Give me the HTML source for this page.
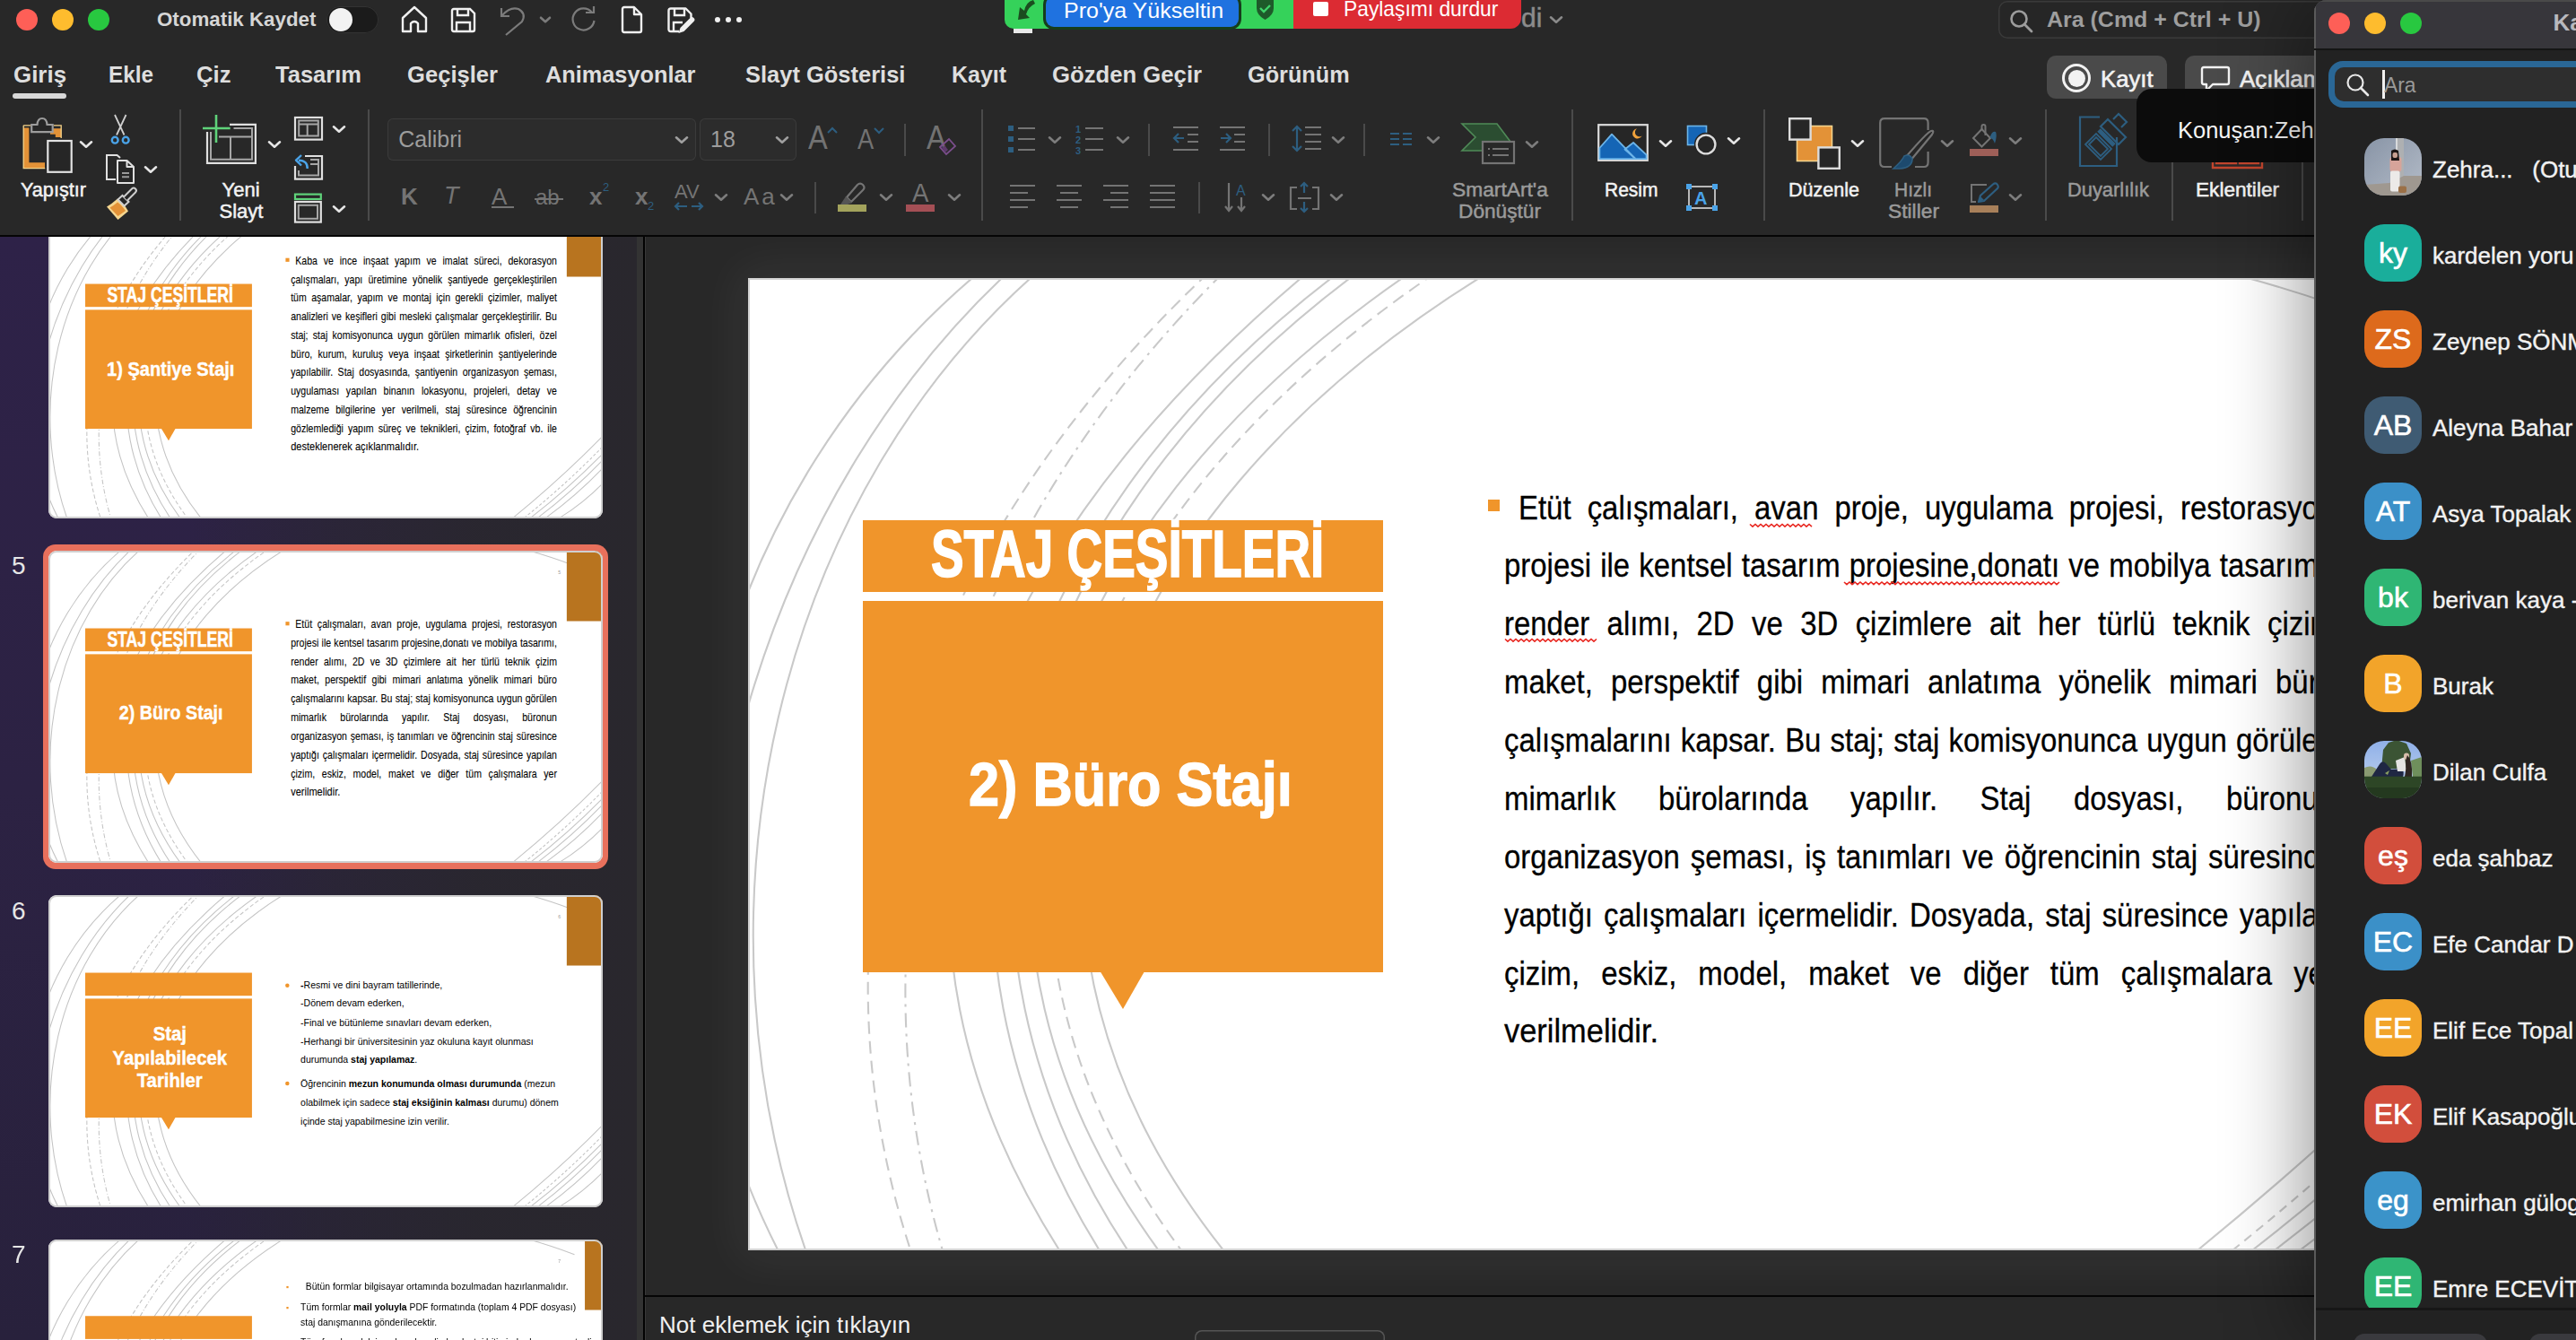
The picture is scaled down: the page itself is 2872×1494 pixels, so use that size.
<!DOCTYPE html><html><head><meta charset="utf-8"><style>html,body{margin:0;padding:0;width:2872px;height:1494px;overflow:hidden;background:#262626}#root{position:relative;width:2872px;height:1494px;overflow:hidden;font-family:"Liberation Sans", sans-serif;background:#282828}b{font-weight:700} .th .arcs{stroke-width:3.3px;stroke:#c4c4c4}</style></head><body><div id="root"><div style="position:absolute;left:0px;top:0px;width:2872px;height:262px;background:#282828;"></div><div style="position:absolute;left:18px;top:10px;width:24px;height:24px;border-radius:50%;background:#fe5f57"></div><div style="position:absolute;left:58px;top:10px;width:24px;height:24px;border-radius:50%;background:#febc2e"></div><div style="position:absolute;left:98px;top:10px;width:24px;height:24px;border-radius:50%;background:#28c840"></div><div style="position:absolute;left:174.5px;top:11.4px;font-size:22px;line-height:22px;font-weight:700;color:#d6d6d6;white-space:pre;transform:scaleX(1.015);transform-origin:0 0;">Otomatik Kaydet</div><div style="position:absolute;left:364px;top:7px;width:58px;height:30px;border-radius:15px;background:#1b1b1b;box-shadow:inset 0 0 0 1px #333"></div><div style="position:absolute;left:367px;top:9px;width:26px;height:26px;border-radius:50%;background:#f2f2f2"></div><svg width="30" height="31" viewBox="0 0 30 31" style="position:absolute;left:447px;top:6px;overflow:visible" fill="none" ><path d="M2 14 L15 2 L28 14 V29 H19 V20 Q15 16 11 20 V29 H2 Z" stroke="#f0f0f0" stroke-width="2.4" stroke-linejoin="round"/></svg><svg width="29" height="29" viewBox="0 0 29 29" style="position:absolute;left:502px;top:8px;overflow:visible" fill="none" ><path d="M2 4 Q2 2 4 2 H22 L27 7 V25 Q27 27 25 27 H4 Q2 27 2 25 Z" stroke="#f0f0f0" stroke-width="2.4"/><path d="M8 2 V9 H20 V2 M7 27 V17 H22 V27" stroke="#f0f0f0" stroke-width="2.4"/></svg><svg width="30" height="33" viewBox="0 0 30 33" style="position:absolute;left:557px;top:6px;overflow:visible" fill="none" ><path d="M2 3 V12 H11" stroke="#7b7b7b" stroke-width="2.2"/><path d="M3 11 Q12 1 21 4 Q30 9 25 18 L7 33" stroke="#7b7b7b" stroke-width="2.2"/></svg><svg width="14" height="10" viewBox="0 0 14 10" style="position:absolute;left:601px;top:17px;overflow:visible" fill="none" ><path d="M2 2.75 L7 7.25 L12 2.75" stroke="#7b7b7b" stroke-width="2.6" stroke-linecap="round" stroke-linejoin="round"/></svg><svg width="29" height="30" viewBox="0 0 29 30" style="position:absolute;left:636px;top:7px;overflow:visible" fill="none" ><path d="M24 7 A12 12 0 1 0 26.5 16" stroke="#7b7b7b" stroke-width="2.2"/><path d="M17 7 H26 V0" stroke="#7b7b7b" stroke-width="2.2"/></svg><svg width="25" height="32" viewBox="0 0 25 32" style="position:absolute;left:692px;top:6px;overflow:visible" fill="none" ><path d="M2 4 Q2 2 4 2 H15 L23 10 V28 Q23 30 21 30 H4 Q2 30 2 28 Z M15 2 V10 H23" stroke="#f0f0f0" stroke-width="2.4" stroke-linejoin="round"/></svg><svg width="32" height="31" viewBox="0 0 32 31" style="position:absolute;left:744px;top:8px;overflow:visible" fill="none" ><path d="M13 27 H4 Q1.5 27 1.5 24.5 V4 Q1.5 1.5 4 1.5 H20.5 L26.5 7.5 V12" stroke="#f0f0f0" stroke-width="2.4" stroke-linejoin="round"/><path d="M8 1.5 V9 H19 V1.5 M7 27 V17 H17" stroke="#f0f0f0" stroke-width="2.4"/><path d="M12.5 29 L14.5 23 L25.5 12 Q27.5 10 29.5 12 Q31.5 14 29.5 16 L18.5 27 Z" fill="#f0f0f0"/></svg><div style="position:absolute;left:797px;top:19px;width:6px;height:6px;border-radius:50%;background:#f0f0f0"></div><div style="position:absolute;left:809px;top:19px;width:6px;height:6px;border-radius:50%;background:#f0f0f0"></div><div style="position:absolute;left:821px;top:19px;width:6px;height:6px;border-radius:50%;background:#f0f0f0"></div><div style="position:absolute;left:1130px;top:31px;width:21px;height:6px;background:#e8e8e8;"></div><div style="position:absolute;left:1696.0px;top:5.3px;font-size:30px;line-height:30px;font-weight:400;color:#8c8c8c;white-space:pre;-webkit-text-stroke:0.5px currentColor">di</div><svg width="16" height="12" viewBox="0 0 16 12" style="position:absolute;left:1727px;top:16px;overflow:visible" fill="none" ><path d="M2 3.3000000000000003 L8 8.7 L14 3.3000000000000003" stroke="#8a8a8a" stroke-width="2.6" stroke-linecap="round" stroke-linejoin="round"/></svg><div style="position:absolute;left:2228px;top:1px;width:400px;height:42px;border-radius:10px;background:#262626;box-shadow:inset 0 0 0 1.5px #3a3a3a"></div><svg width="26" height="25" viewBox="0 0 26 25" style="position:absolute;left:2241px;top:11px;overflow:visible" fill="none" ><circle cx="10" cy="10" r="8.5" stroke="#9c9c9c" stroke-width="2.6"/><path d="M16 16 L24 24" stroke="#9c9c9c" stroke-width="2.8" stroke-linecap="round"/></svg><div style="position:absolute;left:2282.0px;top:9.7px;font-size:24px;line-height:24px;font-weight:700;color:#9e9e9e;white-space:pre;transform:scaleX(1.04);transform-origin:0 0;">Ara (Cmd + Ctrl + U)</div><div style="position:absolute;left:14.5px;top:70.0px;font-size:26px;line-height:26px;font-weight:700;color:#dedede;white-space:pre;transform:scaleX(0.9966);transform-origin:0 0;">Giriş</div><div style="position:absolute;left:120.5px;top:70.0px;font-size:26px;line-height:26px;font-weight:700;color:#dedede;white-space:pre;transform:scaleX(0.9346);transform-origin:0 0;">Ekle</div><div style="position:absolute;left:219.0px;top:70.0px;font-size:26px;line-height:26px;font-weight:700;color:#dedede;white-space:pre;transform:scaleX(0.9872);transform-origin:0 0;">Çiz</div><div style="position:absolute;left:306.6px;top:70.0px;font-size:26px;line-height:26px;font-weight:700;color:#dedede;white-space:pre;transform:scaleX(0.9816);transform-origin:0 0;">Tasarım</div><div style="position:absolute;left:453.8px;top:70.0px;font-size:26px;line-height:26px;font-weight:700;color:#dedede;white-space:pre;transform:scaleX(0.9844);transform-origin:0 0;">Geçişler</div><div style="position:absolute;left:607.6px;top:70.0px;font-size:26px;line-height:26px;font-weight:700;color:#dedede;white-space:pre;transform:scaleX(0.9733);transform-origin:0 0;">Animasyonlar</div><div style="position:absolute;left:830.6px;top:70.0px;font-size:26px;line-height:26px;font-weight:700;color:#dedede;white-space:pre;transform:scaleX(0.9797);transform-origin:0 0;">Slayt Gösterisi</div><div style="position:absolute;left:1061.0px;top:70.0px;font-size:26px;line-height:26px;font-weight:700;color:#dedede;white-space:pre;transform:scaleX(0.9591);transform-origin:0 0;">Kayıt</div><div style="position:absolute;left:1172.7px;top:70.0px;font-size:26px;line-height:26px;font-weight:700;color:#dedede;white-space:pre;transform:scaleX(0.9882);transform-origin:0 0;">Gözden Geçir</div><div style="position:absolute;left:1391.0px;top:70.0px;font-size:26px;line-height:26px;font-weight:700;color:#dedede;white-space:pre;transform:scaleX(0.9718);transform-origin:0 0;">Görünüm</div><div style="position:absolute;left:14px;top:104px;width:60px;height:6px;border-radius:3px;background:#d8d8d8"></div><div style="position:absolute;left:2282px;top:62px;width:134px;height:48px;border-radius:10px;background:#4a4a4a"></div><div style="position:absolute;left:2299px;top:71px;width:26px;height:26px;border-radius:50%;border:3.5px solid #f2f2f2"></div><div style="position:absolute;left:2306px;top:78px;width:19px;height:19px;border-radius:50%;background:#f2f2f2"></div><div style="position:absolute;left:2342.0px;top:75.4px;font-size:26px;line-height:26px;font-weight:400;color:#f2f2f2;white-space:pre;transform:scaleX(0.99);transform-origin:0 0;-webkit-text-stroke:0.6px currentColor">Kayıt</div><div style="position:absolute;left:2436px;top:62px;width:170px;height:48px;border-radius:10px;background:#4a4a4a"></div><svg width="34" height="30" viewBox="0 0 34 30" style="position:absolute;left:2453px;top:73px;overflow:visible" fill="none" ><path d="M4 2 H30 Q32 2 32 4 V19 Q32 21 30 21 H14 L7 28 V21 H4 Q2 21 2 19 V4 Q2 2 4 2 Z" stroke="#f2f2f2" stroke-width="2.4" stroke-linejoin="round"/></svg><div style="position:absolute;left:2497.0px;top:75.4px;font-size:26px;line-height:26px;font-weight:400;color:#f2f2f2;white-space:pre;-webkit-text-stroke:0.6px currentColor">Açıklamalar</div><svg width="420" height="140" viewBox="0 0 420 140" style="position:absolute;left:0px;top:115px;overflow:visible" fill="none" ><path d="M29.2 27.5 V69.5 H50 M56 31.5 H65 V38" stroke="#e39237" stroke-width="6.4" fill="none"/><path d="M26.2 24.8 H34 M26.2 24.8 V72.6 H50.2 M60 24.8 H68.2 V39" stroke="#f7d58a" stroke-width="1.3" fill="none"/><path d="M35.2 32.2 V24 H41.5 Q42 17 47 17 Q52 17 52.5 24 H58.7 V32.2 Z" stroke="#9c9c9c" stroke-width="2.2" fill="#262626"/><rect x="53.3" y="42" width="26.4" height="34.8" stroke="#e2e2e2" stroke-width="2.2" fill="#262626"/><path d="M128 13 L138.5 35.5 M140.5 13 L130 35.5" stroke="#cfcfcf" stroke-width="1.8"/><circle cx="128.2" cy="41.2" r="3.4" stroke="#4aa3e8" stroke-width="2.4"/><circle cx="140.2" cy="41.2" r="3.4" stroke="#4aa3e8" stroke-width="2.4"/><path d="M129 85 H119 V58 H130.5 L134 61" stroke="#e0e0e0" stroke-width="2"/><path d="M131 64 H141.5 L149 71 V89 H131 Z M141.5 64 V71 H149" stroke="#e0e0e0" stroke-width="2" fill="#262626" stroke-linejoin="round"/><path d="M136 78 H144 M136 82.3 H144" stroke="#9a9a9a" stroke-width="2"/><path d="M119 115.5 L131.5 130 L143 120.5 Q137 110 131 106.5 Q125 112 119 115.5 Z" fill="#f5d68f"/><path d="M122.5 116.5 L131.5 126 L140 120 Q135 113 131 110.5 Q127 114 122.5 116.5 Z" fill="#e39237"/><path d="M131.5 107.5 L136.5 103 L143.5 110 L138.5 114.5 Z" stroke="#cfcfcf" stroke-width="2" fill="#262626"/><path d="M138 104.5 L147 95.5 Q149 93.5 151 95.5 Q153 97.5 151 99.5 L142 108.5" stroke="#cfcfcf" stroke-width="2" fill="#262626"/><path d="M256 23.8 H284.9 V66.8 H231 V32" stroke="#e0e0e0" stroke-width="2.2"/><path d="M260.5 28 H281 V62.8 H235 V32" stroke="#a6a6a6" stroke-width="2"/><path d="M244 37.6 H281 M257 37.6 V62.8" stroke="#a6a6a6" stroke-width="2"/><path d="M241 13 V44 M226 28 H256.7" stroke="#5fd37a" stroke-width="2.6"/><rect x="329" y="16" width="30" height="24.6" stroke="#e0e0e0" stroke-width="2.2"/><path d="M333.2 19.5 H354.8 V36.6 H333.2 Z M333.2 23.5 H354.8 M342.7 23.5 V36.6" stroke="#a6a6a6" stroke-width="2"/><path d="M340 59 H359 V84.6 H329 V70" stroke="#e0e0e0" stroke-width="2.2"/><path d="M346 63 H355 V80.5 H333 V75 M346 68 H355" stroke="#a6a6a6" stroke-width="2"/><path d="M342.7 73 Q343 64 333 63.7 M336 58 L330 63.7 L336 69.5" stroke="#4aa3e8" stroke-width="2.4" stroke-linejoin="round"/><rect x="329" y="101.6" width="28.8" height="5.4" stroke="#5fd37a" stroke-width="2.2"/><rect x="329" y="110" width="28.8" height="22.6" stroke="#e0e0e0" stroke-width="2.2"/><rect x="332.8" y="113.8" width="21.2" height="15" stroke="#a6a6a6" stroke-width="2"/></svg><svg width="16" height="12" viewBox="0 0 16 12" style="position:absolute;left:88px;top:155px;overflow:visible" fill="none" ><path d="M2 3.3000000000000003 L8 8.7 L14 3.3000000000000003" stroke="#e6e6e6" stroke-width="2.6" stroke-linecap="round" stroke-linejoin="round"/></svg><div style="position:absolute;left:23.0px;top:200.8px;font-size:22px;line-height:22px;font-weight:400;color:#f2f2f2;white-space:pre;transform:scaleX(0.984);transform-origin:0 0;-webkit-text-stroke:0.5px currentColor">Yapıştır</div><svg width="16" height="12" viewBox="0 0 16 12" style="position:absolute;left:160px;top:183px;overflow:visible" fill="none" ><path d="M2 3.3000000000000003 L8 8.7 L14 3.3000000000000003" stroke="#e6e6e6" stroke-width="2.6" stroke-linecap="round" stroke-linejoin="round"/></svg><div style="position:absolute;left:200px;top:122px;width:2px;height:124px;background:#4a4a4a;"></div><svg width="16" height="12" viewBox="0 0 16 12" style="position:absolute;left:298px;top:155px;overflow:visible" fill="none" ><path d="M2 3.3000000000000003 L8 8.7 L14 3.3000000000000003" stroke="#e6e6e6" stroke-width="2.6" stroke-linecap="round" stroke-linejoin="round"/></svg><div style="position:absolute;left:247.6px;top:200.8px;font-size:22px;line-height:22px;font-weight:400;color:#f2f2f2;white-space:pre;transform:scaleX(1.0);transform-origin:0 0;-webkit-text-stroke:0.5px currentColor">Yeni</div><div style="position:absolute;left:244.5px;top:224.9px;font-size:22px;line-height:22px;font-weight:400;color:#f2f2f2;white-space:pre;transform:scaleX(1.0);transform-origin:0 0;-webkit-text-stroke:0.5px currentColor">Slayt</div><svg width="16" height="12" viewBox="0 0 16 12" style="position:absolute;left:370px;top:138px;overflow:visible" fill="none" ><path d="M2 3.3000000000000003 L8 8.7 L14 3.3000000000000003" stroke="#e6e6e6" stroke-width="2.6" stroke-linecap="round" stroke-linejoin="round"/></svg><svg width="16" height="12" viewBox="0 0 16 12" style="position:absolute;left:370px;top:227px;overflow:visible" fill="none" ><path d="M2 3.3000000000000003 L8 8.7 L14 3.3000000000000003" stroke="#e6e6e6" stroke-width="2.6" stroke-linecap="round" stroke-linejoin="round"/></svg><div style="position:absolute;left:410px;top:122px;width:2px;height:124px;background:#4a4a4a;"></div><div style="position:absolute;left:432px;top:132px;width:344px;height:47px;border-radius:6px;background:#2c2c2c;box-shadow:inset 0 0 0 1px #3b3b3b"></div><div style="position:absolute;left:444.3px;top:142.8px;font-size:25px;line-height:25px;font-weight:400;color:#9d9d9d;white-space:pre;transform:scaleX(1.0);transform-origin:0 0;">Calibri</div><svg width="16" height="12" viewBox="0 0 16 12" style="position:absolute;left:752px;top:150px;overflow:visible" fill="none" ><path d="M2 3.3000000000000003 L8 8.7 L14 3.3000000000000003" stroke="#a0a0a0" stroke-width="2.6" stroke-linecap="round" stroke-linejoin="round"/></svg><div style="position:absolute;left:780px;top:132px;width:108px;height:47px;border-radius:6px;background:#2c2c2c;box-shadow:inset 0 0 0 1px #3b3b3b"></div><div style="position:absolute;left:792.0px;top:142.8px;font-size:25px;line-height:25px;font-weight:400;color:#9d9d9d;white-space:pre;">18</div><svg width="16" height="12" viewBox="0 0 16 12" style="position:absolute;left:864px;top:150px;overflow:visible" fill="none" ><path d="M2 3.3000000000000003 L8 8.7 L14 3.3000000000000003" stroke="#a0a0a0" stroke-width="2.6" stroke-linecap="round" stroke-linejoin="round"/></svg><div style="position:absolute;left:901.0px;top:134.7px;font-size:37px;line-height:37px;font-weight:400;color:#727272;white-space:pre;transform:scaleX(0.88);transform-origin:0 0;">A</div><svg width="12" height="8" viewBox="0 0 12 8" style="position:absolute;left:922px;top:141px;overflow:visible" fill="none" ><path d="M1 7 L6 2 L11 7" stroke="#2d5e80" stroke-width="2"/></svg><div style="position:absolute;left:956.0px;top:139.8px;font-size:31px;line-height:31px;font-weight:400;color:#727272;white-space:pre;transform:scaleX(0.88);transform-origin:0 0;">A</div><svg width="12" height="8" viewBox="0 0 12 8" style="position:absolute;left:974px;top:142px;overflow:visible" fill="none" ><path d="M1 1 L6 6 L11 1" stroke="#2d5e80" stroke-width="2"/></svg><div style="position:absolute;left:1008px;top:138px;width:2px;height:36px;background:#4a4a4a;"></div><div style="position:absolute;left:1033.0px;top:134.7px;font-size:37px;line-height:37px;font-weight:400;color:#727272;white-space:pre;transform:scaleX(0.88);transform-origin:0 0;">A</div><svg width="20" height="20" viewBox="0 0 20 20" style="position:absolute;left:1047px;top:152px;overflow:visible" fill="none" ><path d="M1 12 L11 3 L18 11 L8 20 Z" stroke="#7b4e8c" stroke-width="1.8"/><path d="M3 13 L6 10 L10 15 L7 18 Z" fill="#5d3a6c"/></svg><div style="position:absolute;left:447.0px;top:206.0px;font-size:26px;line-height:26px;font-weight:700;color:#747474;white-space:pre;">K</div><div style="position:absolute;left:495.0px;top:205.1px;font-size:27px;line-height:27px;font-weight:400;color:#747474;white-space:pre;font-style:italic">T</div><div style="position:absolute;left:548.0px;top:206.0px;font-size:26px;line-height:26px;font-weight:400;color:#747474;white-space:pre;">A</div><div style="position:absolute;left:548px;top:230px;width:25px;height:2.2px;background:#747474;"></div><div style="position:absolute;left:597.0px;top:207.7px;font-size:24px;line-height:24px;font-weight:400;color:#747474;white-space:pre;">ab</div><div style="position:absolute;left:596px;top:221px;width:32px;height:2px;background:#747474;"></div><div style="position:absolute;left:657.0px;top:206.0px;font-size:26px;line-height:26px;font-weight:700;color:#747474;white-space:pre;">x</div><div style="position:absolute;left:672.0px;top:202.0px;font-size:13px;line-height:13px;font-weight:400;color:#2d5e80;white-space:pre;">2</div><div style="position:absolute;left:708.0px;top:206.0px;font-size:26px;line-height:26px;font-weight:700;color:#747474;white-space:pre;">x</div><div style="position:absolute;left:722.0px;top:223.0px;font-size:13px;line-height:13px;font-weight:400;color:#2d5e80;white-space:pre;">2</div><div style="position:absolute;left:752.0px;top:203.4px;font-size:22px;line-height:22px;font-weight:400;color:#747474;white-space:pre;">AV</div><svg width="33" height="12" viewBox="0 0 33 12" style="position:absolute;left:752px;top:224px;overflow:visible" fill="none" ><path d="M2 6 H14 M5 2 L1 6 L5 10 M19 6 H31 M27 2 L31 6 L27 10" stroke="#2d5e80" stroke-width="2.2"/></svg><svg width="16" height="12" viewBox="0 0 16 12" style="position:absolute;left:796px;top:214px;overflow:visible" fill="none" ><path d="M2 3.3000000000000003 L8 8.7 L14 3.3000000000000003" stroke="#7d7d7d" stroke-width="2.6" stroke-linecap="round" stroke-linejoin="round"/></svg><div style="position:absolute;left:829.0px;top:206.0px;font-size:26px;line-height:26px;font-weight:400;color:#747474;white-space:pre;letter-spacing:3px">Aa</div><svg width="16" height="12" viewBox="0 0 16 12" style="position:absolute;left:869px;top:214px;overflow:visible" fill="none" ><path d="M2 3.3000000000000003 L8 8.7 L14 3.3000000000000003" stroke="#7d7d7d" stroke-width="2.6" stroke-linecap="round" stroke-linejoin="round"/></svg><div style="position:absolute;left:908px;top:203px;width:2px;height:35px;background:#4a4a4a;"></div><svg width="34" height="36" viewBox="0 0 34 36" style="position:absolute;left:934px;top:202px;overflow:visible" fill="none" ><path d="M10 18 L22 4 Q25 1 28 4 Q31 7 28 10 L15 23 Z" stroke="#747474" stroke-width="2.2"/><path d="M9 17 L16 24 L11 26 H3 Z" fill="#555"/><rect x="0" y="26" width="32" height="8" fill="#a3a35c"/></svg><svg width="16" height="12" viewBox="0 0 16 12" style="position:absolute;left:980px;top:214px;overflow:visible" fill="none" ><path d="M2 3.3000000000000003 L8 8.7 L14 3.3000000000000003" stroke="#7d7d7d" stroke-width="2.6" stroke-linecap="round" stroke-linejoin="round"/></svg><div style="position:absolute;left:1017.0px;top:200.3px;font-size:30px;line-height:30px;font-weight:400;color:#747474;white-space:pre;transform:scaleX(0.92);transform-origin:0 0;">A</div><div style="position:absolute;left:1010px;top:228px;width:32px;height:8px;background:#a44f55;"></div><svg width="16" height="12" viewBox="0 0 16 12" style="position:absolute;left:1056px;top:214px;overflow:visible" fill="none" ><path d="M2 3.3000000000000003 L8 8.7 L14 3.3000000000000003" stroke="#7d7d7d" stroke-width="2.6" stroke-linecap="round" stroke-linejoin="round"/></svg><div style="position:absolute;left:1094px;top:122px;width:2px;height:124px;background:#4a4a4a;"></div><svg width="31" height="31" viewBox="0 0 31 31" style="position:absolute;left:1123px;top:139px;overflow:visible" fill="none" ><rect x="1" y="1" width="6" height="6" fill="#2d5e80"/><rect x="1" y="13" width="6" height="6" fill="#2d5e80"/><rect x="1" y="25" width="6" height="6" fill="#2d5e80"/><path d="M12 4 H31 M12 16 H31 M12 28 H31" stroke="#747474" stroke-width="2.2"/></svg><svg width="16" height="12" viewBox="0 0 16 12" style="position:absolute;left:1168px;top:150px;overflow:visible" fill="none" ><path d="M2 3.3000000000000003 L8 8.7 L14 3.3000000000000003" stroke="#7d7d7d" stroke-width="2.6" stroke-linecap="round" stroke-linejoin="round"/></svg><svg width="32" height="34" viewBox="0 0 32 34" style="position:absolute;left:1199px;top:138px;overflow:visible" fill="none" ><text x="0" y="10" font-size="11" font-weight="700" fill="#2d5e80" font-family="Liberation Sans">1</text><text x="0" y="22" font-size="11" font-weight="700" fill="#2d5e80" font-family="Liberation Sans">2</text><text x="0" y="34" font-size="11" font-weight="700" fill="#2d5e80" font-family="Liberation Sans">3</text><path d="M11 5 H31 M11 17 H31 M11 29 H31" stroke="#747474" stroke-width="2.2"/></svg><svg width="16" height="12" viewBox="0 0 16 12" style="position:absolute;left:1244px;top:150px;overflow:visible" fill="none" ><path d="M2 3.3000000000000003 L8 8.7 L14 3.3000000000000003" stroke="#7d7d7d" stroke-width="2.6" stroke-linecap="round" stroke-linejoin="round"/></svg><div style="position:absolute;left:1280px;top:138px;width:2px;height:36px;background:#4a4a4a;"></div><svg width="29" height="30" viewBox="0 0 29 30" style="position:absolute;left:1308px;top:140px;overflow:visible" fill="none" ><path d="M0 2 H28 M16 10 H28 M16 18 H28 M0 27 H28" stroke="#747474" stroke-width="2.2"/><path d="M12 14 H1 M6 9 L1 14 L6 19" stroke="#2d5e80" stroke-width="2.2"/></svg><svg width="29" height="30" viewBox="0 0 29 30" style="position:absolute;left:1360px;top:140px;overflow:visible" fill="none" ><path d="M0 2 H28 M16 10 H28 M16 18 H28 M0 27 H28" stroke="#747474" stroke-width="2.2"/><path d="M1 14 H12 M7 9 L12 14 L7 19" stroke="#2d5e80" stroke-width="2.2"/></svg><div style="position:absolute;left:1414px;top:138px;width:2px;height:36px;background:#4a4a4a;"></div><svg width="33" height="31" viewBox="0 0 33 31" style="position:absolute;left:1440px;top:139px;overflow:visible" fill="none" ><path d="M6 2 V29 M1 7 L6 2 L11 7 M1 24 L6 29 L11 24" stroke="#2d5e80" stroke-width="2.2"/><path d="M15 3 H33 M15 11 H33 M15 19 H33 M15 27 H33" stroke="#747474" stroke-width="2.2"/></svg><svg width="16" height="12" viewBox="0 0 16 12" style="position:absolute;left:1484px;top:150px;overflow:visible" fill="none" ><path d="M2 3.3000000000000003 L8 8.7 L14 3.3000000000000003" stroke="#7d7d7d" stroke-width="2.6" stroke-linecap="round" stroke-linejoin="round"/></svg><div style="position:absolute;left:1520px;top:138px;width:2px;height:36px;background:#4a4a4a;"></div><svg width="25" height="17" viewBox="0 0 25 17" style="position:absolute;left:1550px;top:147px;overflow:visible" fill="none" ><path d="M0 2 H10 M14 2 H24 M0 8 H10 M14 8 H24 M0 14 H10 M14 14 H24" stroke="#2d5e80" stroke-width="2.2"/></svg><svg width="16" height="12" viewBox="0 0 16 12" style="position:absolute;left:1590px;top:150px;overflow:visible" fill="none" ><path d="M2 3.3000000000000003 L8 8.7 L14 3.3000000000000003" stroke="#7d7d7d" stroke-width="2.6" stroke-linecap="round" stroke-linejoin="round"/></svg><svg width="60" height="45" viewBox="0 0 60 45" style="position:absolute;left:1629px;top:138px;overflow:visible" fill="none" ><path d="M1 0 H40 L55 20 H36 V30 H1 L16 15 Z" fill="#2b4d31" stroke="#4f8a57" stroke-width="1.6"/><rect x="24" y="20" width="35" height="24" fill="#282828" stroke="#747474" stroke-width="2.2"/><path d="M30 28 H32 M35 28 H53 M30 35 H32 M35 35 H53" stroke="#747474" stroke-width="1.8"/></svg><svg width="16" height="12" viewBox="0 0 16 12" style="position:absolute;left:1700px;top:155px;overflow:visible" fill="none" ><path d="M2 3.3000000000000003 L8 8.7 L14 3.3000000000000003" stroke="#7d7d7d" stroke-width="2.6" stroke-linecap="round" stroke-linejoin="round"/></svg><div style="position:absolute;left:1618.8px;top:201.4px;font-size:22px;line-height:22px;font-weight:400;color:#9a9a9a;white-space:pre;transform:scaleX(1.035);transform-origin:0 0;-webkit-text-stroke:0.5px currentColor">SmartArt'a</div><div style="position:absolute;left:1626.0px;top:224.9px;font-size:22px;line-height:22px;font-weight:400;color:#9a9a9a;white-space:pre;transform:scaleX(1.031);transform-origin:0 0;-webkit-text-stroke:0.5px currentColor">Dönüştür</div><svg width="28" height="28" viewBox="0 0 28 28" style="position:absolute;left:1126px;top:205px;overflow:visible" fill="none" ><path d="M0 2 H28 M0 10 H20 M0 18 H28 M0 26 H20" stroke="#747474" stroke-width="2.2"/></svg><svg width="28" height="28" viewBox="0 0 28 28" style="position:absolute;left:1178px;top:205px;overflow:visible" fill="none" ><path d="M0 2 H28 M4 10 H24 M0 18 H28 M4 26 H24" stroke="#747474" stroke-width="2.2"/></svg><svg width="28" height="28" viewBox="0 0 28 28" style="position:absolute;left:1230px;top:205px;overflow:visible" fill="none" ><path d="M0 2 H28 M8 10 H28 M0 18 H28 M8 26 H28" stroke="#747474" stroke-width="2.2"/></svg><svg width="28" height="28" viewBox="0 0 28 28" style="position:absolute;left:1282px;top:205px;overflow:visible" fill="none" ><path d="M0 2 H28 M0 10 H28 M0 18 H28 M0 26 H28" stroke="#747474" stroke-width="2.2"/></svg><div style="position:absolute;left:1336px;top:203px;width:2px;height:35px;background:#4a4a4a;"></div><svg width="28" height="34" viewBox="0 0 28 34" style="position:absolute;left:1366px;top:203px;overflow:visible" fill="none" ><path d="M4 1 V32 M0 27 L4 32 L8 27 M18 17 V32 M14 27 L18 32 L22 27" stroke="#747474" stroke-width="2.2"/><text x="12" y="15" font-size="16" fill="#2d5e80" font-family="Liberation Sans">A</text></svg><svg width="16" height="12" viewBox="0 0 16 12" style="position:absolute;left:1406px;top:214px;overflow:visible" fill="none" ><path d="M2 3.3000000000000003 L8 8.7 L14 3.3000000000000003" stroke="#7d7d7d" stroke-width="2.6" stroke-linecap="round" stroke-linejoin="round"/></svg><svg width="33" height="34" viewBox="0 0 33 34" style="position:absolute;left:1438px;top:203px;overflow:visible" fill="none" ><path d="M8 6 H1 V30 H8 M25 6 H32 V30 H25 M9 18 H24" stroke="#747474" stroke-width="2.2"/><path d="M16 1 V12 M12 5 L16 1 L20 5 M16 22 V33 M12 29 L16 33 L20 29" stroke="#2d5e80" stroke-width="2.2"/></svg><svg width="16" height="12" viewBox="0 0 16 12" style="position:absolute;left:1482px;top:214px;overflow:visible" fill="none" ><path d="M2 3.3000000000000003 L8 8.7 L14 3.3000000000000003" stroke="#7d7d7d" stroke-width="2.6" stroke-linecap="round" stroke-linejoin="round"/></svg><div style="position:absolute;left:1752px;top:122px;width:2px;height:124px;background:#4a4a4a;"></div><svg width="57" height="42" viewBox="0 0 57 42" style="position:absolute;left:1781px;top:138px;overflow:visible" fill="none" ><rect x="1.2" y="1.2" width="54.6" height="39.6" fill="#262626" stroke="#dcdcdc" stroke-width="2.2"/><path d="M2.4 27 L16 11.7 L42.5 39.2 H2.4 Z" fill="#1565b5" stroke="#6cb4e8" stroke-width="1.8" stroke-linejoin="round"/><path d="M30.5 28.5 L40 21 L54.6 34.6 V39.2 H42.5 Z" fill="#1565b5" stroke="#6cb4e8" stroke-width="1.8" stroke-linejoin="round"/><path d="M42.5 39.2 L30.5 27" stroke="#6cb4e8" stroke-width="1.8"/><path d="M44 5.5 A5.5 5.5 0 1 0 49.5 13.5 A4.5 4.5 0 0 1 44 5.5 Z" fill="#f0a23c"/></svg><svg width="16" height="12" viewBox="0 0 16 12" style="position:absolute;left:1849px;top:154px;overflow:visible" fill="none" ><path d="M2 3.3000000000000003 L8 8.7 L14 3.3000000000000003" stroke="#e6e6e6" stroke-width="2.6" stroke-linecap="round" stroke-linejoin="round"/></svg><svg width="36" height="36" viewBox="0 0 36 36" style="position:absolute;left:1880px;top:139px;overflow:visible" fill="none" ><rect x="1.5" y="1.5" width="21" height="21" fill="#1565b5" stroke="#6cb4e8" stroke-width="1.6"/><circle cx="22" cy="22" r="13.2" fill="#262626"/><circle cx="22" cy="22" r="10.4" fill="none" stroke="#dcdcdc" stroke-width="2.4"/></svg><svg width="16" height="12" viewBox="0 0 16 12" style="position:absolute;left:1925px;top:151px;overflow:visible" fill="none" ><path d="M2 3.3000000000000003 L8 8.7 L14 3.3000000000000003" stroke="#e6e6e6" stroke-width="2.6" stroke-linecap="round" stroke-linejoin="round"/></svg><div style="position:absolute;left:1789.0px;top:201.4px;font-size:22px;line-height:22px;font-weight:400;color:#f2f2f2;white-space:pre;transform:scaleX(0.954);transform-origin:0 0;-webkit-text-stroke:0.5px currentColor">Resim</div><svg width="35" height="30" viewBox="0 0 35 30" style="position:absolute;left:1880px;top:205px;overflow:visible" fill="none" ><rect x="3" y="3" width="29" height="24" stroke="#dcdcdc" stroke-width="1.6"/><text x="9" y="23" font-size="20" font-weight="700" fill="#4aa3e8" font-family="Liberation Sans">A</text><rect x="0" y="0" width="6" height="6" fill="#4aa3e8"/><rect x="29" y="0" width="6" height="6" fill="#4aa3e8"/><rect x="0" y="24" width="6" height="6" fill="#4aa3e8"/><rect x="29" y="24" width="6" height="6" fill="#4aa3e8"/></svg><div style="position:absolute;left:1966px;top:122px;width:2px;height:124px;background:#4a4a4a;"></div><svg width="58" height="58" viewBox="0 0 58 58" style="position:absolute;left:1994px;top:131px;overflow:visible" fill="none" ><rect x="9.5" y="9.5" width="39" height="39" fill="#e39237" stroke="#f5d68f" stroke-width="1.5"/><rect x="1.2" y="1.2" width="23.4" height="23.4" fill="#262626" stroke="#dcdcdc" stroke-width="2.4"/><rect x="33.4" y="33.4" width="23.4" height="23.4" fill="#262626" stroke="#dcdcdc" stroke-width="2.4"/></svg><svg width="16" height="12" viewBox="0 0 16 12" style="position:absolute;left:2063px;top:154px;overflow:visible" fill="none" ><path d="M2 3.3000000000000003 L8 8.7 L14 3.3000000000000003" stroke="#e6e6e6" stroke-width="2.6" stroke-linecap="round" stroke-linejoin="round"/></svg><div style="position:absolute;left:1994.0px;top:201.4px;font-size:22px;line-height:22px;font-weight:400;color:#f2f2f2;white-space:pre;transform:scaleX(0.979);transform-origin:0 0;-webkit-text-stroke:0.5px currentColor">Düzenle</div><svg width="64" height="64" viewBox="0 0 64 64" style="position:absolute;left:2095px;top:131px;overflow:visible" fill="none" ><path d="M14 55 H6 Q1.2 55 1.2 50 V6 Q1.2 1.2 6 1.2 H50 Q54.6 1.2 54.6 6 V14 M54.6 38 V50 Q54.6 55 50 55 H40" stroke="#747474" stroke-width="2.2"/><path d="M35 48 L59 19 Q62 14 58 15 Q54 16 29 45" stroke="#747474" stroke-width="2.2" fill="#262626"/><path d="M16 57 Q26 48 28 43 Q34 40 37 46 Q37 56 23 57 Z" fill="#1d4a6e" stroke="#2d5e80" stroke-width="1.6"/></svg><svg width="16" height="12" viewBox="0 0 16 12" style="position:absolute;left:2163px;top:154px;overflow:visible" fill="none" ><path d="M2 3.3000000000000003 L8 8.7 L14 3.3000000000000003" stroke="#7d7d7d" stroke-width="2.6" stroke-linecap="round" stroke-linejoin="round"/></svg><div style="position:absolute;left:2112.0px;top:201.4px;font-size:22px;line-height:22px;font-weight:400;color:#9a9a9a;white-space:pre;transform:scaleX(0.955);transform-origin:0 0;-webkit-text-stroke:0.5px currentColor">Hızlı</div><div style="position:absolute;left:2105.0px;top:224.9px;font-size:22px;line-height:22px;font-weight:400;color:#9a9a9a;white-space:pre;transform:scaleX(1.036);transform-origin:0 0;-webkit-text-stroke:0.5px currentColor">Stiller</div><svg width="34" height="36" viewBox="0 0 34 36" style="position:absolute;left:2195px;top:139px;overflow:visible" fill="none" ><path d="M5 15 L14.5 5 L24 15 L14.5 24.5 Z" stroke="#747474" stroke-width="2"/><path d="M14.5 5 V2 Q14.5 0 16.5 0 Q18.5 0 18.5 2 V12" stroke="#747474" stroke-width="2"/><path d="M24 13 Q26 7 30 8 Q32 12 29 21 Q27 15 24 15 Z" fill="#2d5e80"/><rect x="1" y="27" width="32" height="8" fill="#9e5f58"/></svg><svg width="16" height="12" viewBox="0 0 16 12" style="position:absolute;left:2239px;top:151px;overflow:visible" fill="none" ><path d="M2 3.3000000000000003 L8 8.7 L14 3.3000000000000003" stroke="#7d7d7d" stroke-width="2.6" stroke-linecap="round" stroke-linejoin="round"/></svg><svg width="34" height="34" viewBox="0 0 34 34" style="position:absolute;left:2195px;top:204px;overflow:visible" fill="none" ><path d="M20 2 H3 V21 H8" stroke="#747474" stroke-width="2"/><path d="M11 21 L13 14 L27 1.5 Q30 -1 32 2 Q34 5 31 7 L17 20 Z" stroke="#2d5e80" stroke-width="2.2" stroke-linejoin="round"/><path d="M11 21 L13 15 L17 19 Z" fill="#2d5e80"/><rect x="1" y="25" width="32" height="8" fill="#a8805a"/></svg><svg width="16" height="12" viewBox="0 0 16 12" style="position:absolute;left:2239px;top:214px;overflow:visible" fill="none" ><path d="M2 3.3000000000000003 L8 8.7 L14 3.3000000000000003" stroke="#7d7d7d" stroke-width="2.6" stroke-linecap="round" stroke-linejoin="round"/></svg><div style="position:absolute;left:2280px;top:122px;width:2px;height:124px;background:#4a4a4a;"></div><svg width="56" height="62" viewBox="0 0 56 62" style="position:absolute;left:2317px;top:127px;overflow:visible" fill="none" ><path d="M24 3.5 H2 V58 H43 V26" stroke="#2d5e80" stroke-width="2.2"/><path d="M8 34 L20 22 L37 39 L25 51 Z M12 34 L20 26 L33 39 L25 47 Z" stroke="#2d5e80" stroke-width="1.8"/><path d="M25 14 L33 6 L53 26 L45 34 Z" stroke="#2d5e80" stroke-width="2.2"/><path d="M23 18 L40 35" stroke="#2d5e80" stroke-width="5"/><path d="M39 6 L45 0 L54 9 L48 15" stroke="#2d5e80" stroke-width="2.2"/></svg><div style="position:absolute;left:2305.0px;top:201.4px;font-size:22px;line-height:22px;font-weight:400;color:#9a9a9a;white-space:pre;transform:scaleX(0.993);transform-origin:0 0;-webkit-text-stroke:0.5px currentColor">Duyarlılık</div><div style="position:absolute;left:2421px;top:122px;width:2px;height:124px;background:#4a4a4a;"></div><svg width="60" height="30" viewBox="0 0 60 30" style="position:absolute;left:2465px;top:160px;overflow:visible" fill="none" ><path d="M2 2 V27 H57 V2 M6 8 V22 H28 V8 M32 8 V22 H53 V8" stroke="#c2452d" stroke-width="2.4"/></svg><div style="position:absolute;left:2448.0px;top:201.4px;font-size:22px;line-height:22px;font-weight:400;color:#f2f2f2;white-space:pre;transform:scaleX(1.028);transform-origin:0 0;-webkit-text-stroke:0.5px currentColor">Eklentiler</div><div style="position:absolute;left:2566px;top:122px;width:2px;height:124px;background:#4a4a4a;"></div><div style="position:absolute;left:0px;top:262px;width:2872px;height:2px;background:#050505;"></div><div style="position:absolute;left:0;top:264px;width:710px;height:1230px;overflow:hidden;background:linear-gradient(90deg,rgba(41,39,45,0) 0%,rgba(41,39,45,0) 30%,rgba(41,39,45,0.55) 52%,rgba(41,39,45,0.9) 75%,#29272d 100%),linear-gradient(180deg,#2e2248 0%,#2c2243 50%,#28213c 100%)"><div style="position:absolute;left:0;top:-264px;width:710px;height:1758px"><div style="position:absolute;left:54px;top:230.3px;width:617.6px;height:347.6px;border-radius:9px;overflow:hidden;background:#fff;box-shadow:inset 0 0 0 0 #000"><div class="th" style="position:absolute;left:0;top:0;width:1927px;height:1084px;transform:scale(0.3205);transform-origin:0 0"><svg class="arcs" width="1927" height="1084" style="position:absolute;left:0;top:0" fill="none" stroke="#c9c9c9" stroke-width="2.1"><path d="M257.0 -6 A908.0 900.0 0 0 0 36.5 1090"/><path d="M289.4 -6 A882.8 1050.0 0 0 0 -18.7 1090"/><path d="M321.8 -6 A785.7 923.7 0 0 0 66.3 1090"/><path d="M513.4 -6 A2049.6 1372.9 0 0 0 183.2 1090" stroke-dasharray="14 8"/><path d="M530.0 -6 A1603.1 1277.6 0 0 0 218.6 1090" stroke-dasharray="16 7 3 7"/><path d="M623.6 -6 A5803.0 1913.3 0 0 0 351.0 1090"/><path d="M658.2 -6 A1488.3 1023.4 0 0 0 395.5 1090"/><path d="M679.1 -6 A1455.8 999.4 0 0 0 427.3 1090"/><path d="M738.2 -6 A1709.4 1027.4 0 0 0 462.1 1090"/><path d="M766.7 -6 A1778.5 1036.9 0 0 0 487.6 1090" stroke-dasharray="14 8"/><path d="M824.9 -6 A1532.6 947.3 0 0 0 534.9 1090"/><path d="M1616 1084 Q1779.5 950.5 1927 801"/><path d="M1655 1084 Q1799.0 968.5 1927 837" stroke-dasharray="10 7"/><path d="M1677 1084 Q1810.0 981.0 1927 862"/><path d="M1702 1084 Q1822.5 992.0 1927 884"/><path d="M1730 1084 Q1836.5 1006.0 1927 912"/><path d="M1778 1084 Q1860.5 1032.5 1927 965"/><path d="M1672 0 Q1745 20 1830 52"/></svg><div style="position:absolute;left:1803px;top:0px;width:124px;height:245px;background:#B8741F;"></div><div style="position:absolute;left:1773.0px;top:66.5px;font-size:16px;line-height:16px;font-weight:400;color:#999;white-space:pre;">4</div><div style="position:absolute;left:128px;top:270px;width:580px;height:80px;background:#F0952B;"></div><div style="position:absolute;left:128px;top:360px;width:580px;height:413.5px;background:#F0952B;"></div><svg width="60" height="50" style="position:absolute;left:388px;top:772px"><polygon points="4.6,1 54,1 30,43" fill="#F0952B"/></svg><div style="position:absolute;left:204.0px;top:271.4px;font-size:74px;line-height:74px;font-weight:700;color:#fff;white-space:pre;transform:scaleX(0.742);transform-origin:0 0;-webkit-text-stroke:1.6px #fff">STAJ ÇEŞİTLERİ</div><div style="position:absolute;left:203.0px;top:530.6px;font-size:69px;line-height:69px;font-weight:700;color:#fff;white-space:pre;transform:scaleX(0.905);transform-origin:0 0;-webkit-text-stroke:1.4px #fff">1) Şantiye Stajı</div><div style="position:absolute;left:825px;top:180px;width:12.6px;height:13px;background:#F0952B;"></div><div style="position:absolute;left:859px;top:170.7px;width:1022.5px;display:flex;justify-content:space-between;font-size:37px;line-height:37px;color:#000;white-space:pre;transform:scaleX(0.8900);transform-origin:0 0;-webkit-text-stroke:0.3px #000"><span>Kaba</span><span>ve</span><span>ince</span><span>inşaat</span><span>yapım</span><span>ve</span><span>imalat</span><span>süreci,</span><span>dekorasyon</span></div><div style="position:absolute;left:843px;top:235.5px;width:1040.4px;display:flex;justify-content:space-between;font-size:37px;line-height:37px;color:#000;white-space:pre;transform:scaleX(0.8900);transform-origin:0 0;-webkit-text-stroke:0.3px #000"><span>çalışmaları,</span><span>yapı</span><span>üretimine</span><span>yönelik</span><span>şantiyede</span><span>gerçekleştirilen</span></div><div style="position:absolute;left:843px;top:300.4px;width:1040.4px;display:flex;justify-content:space-between;font-size:37px;line-height:37px;color:#000;white-space:pre;transform:scaleX(0.8900);transform-origin:0 0;-webkit-text-stroke:0.3px #000"><span>tüm</span><span>aşamalar,</span><span>yapım</span><span>ve</span><span>montaj</span><span>için</span><span>gerekli</span><span>çizimler,</span><span>maliyet</span></div><div style="position:absolute;left:843px;top:365.3px;width:1040.4px;display:flex;justify-content:space-between;font-size:37px;line-height:37px;color:#000;white-space:pre;transform:scaleX(0.8900);transform-origin:0 0;-webkit-text-stroke:0.3px #000"><span>analizleri</span><span>ve</span><span>keşifleri</span><span>gibi</span><span>mesleki</span><span>çalışmalar</span><span>gerçekleştirilir.</span><span>Bu</span></div><div style="position:absolute;left:843px;top:430.2px;width:1040.4px;display:flex;justify-content:space-between;font-size:37px;line-height:37px;color:#000;white-space:pre;transform:scaleX(0.8900);transform-origin:0 0;-webkit-text-stroke:0.3px #000"><span>staj;</span><span>staj</span><span>komisyonunca</span><span>uygun</span><span>görülen</span><span>mimarlık</span><span>ofisleri,</span><span>özel</span></div><div style="position:absolute;left:843px;top:495.0px;width:1040.4px;display:flex;justify-content:space-between;font-size:37px;line-height:37px;color:#000;white-space:pre;transform:scaleX(0.8900);transform-origin:0 0;-webkit-text-stroke:0.3px #000"><span>büro,</span><span>kurum,</span><span>kuruluş</span><span>veya</span><span>inşaat</span><span>şirketlerinin</span><span>şantiyelerinde</span></div><div style="position:absolute;left:843px;top:559.9px;width:1040.4px;display:flex;justify-content:space-between;font-size:37px;line-height:37px;color:#000;white-space:pre;transform:scaleX(0.8900);transform-origin:0 0;-webkit-text-stroke:0.3px #000"><span>yapılabilir.</span><span>Staj</span><span>dosyasında,</span><span>şantiyenin</span><span>organizasyon</span><span>şeması,</span></div><div style="position:absolute;left:843px;top:624.8px;width:1040.4px;display:flex;justify-content:space-between;font-size:37px;line-height:37px;color:#000;white-space:pre;transform:scaleX(0.8900);transform-origin:0 0;-webkit-text-stroke:0.3px #000"><span>uygulaması</span><span>yapılan</span><span>binanın</span><span>lokasyonu,</span><span>projeleri,</span><span>detay</span><span>ve</span></div><div style="position:absolute;left:843px;top:689.6px;width:1040.4px;display:flex;justify-content:space-between;font-size:37px;line-height:37px;color:#000;white-space:pre;transform:scaleX(0.8900);transform-origin:0 0;-webkit-text-stroke:0.3px #000"><span>malzeme</span><span>bilgilerine</span><span>yer</span><span>verilmeli,</span><span>staj</span><span>süresince</span><span>öğrencinin</span></div><div style="position:absolute;left:843px;top:754.5px;width:1040.4px;display:flex;justify-content:space-between;font-size:37px;line-height:37px;color:#000;white-space:pre;transform:scaleX(0.8900);transform-origin:0 0;-webkit-text-stroke:0.3px #000"><span>gözlemlediği</span><span>yapım</span><span>süreç</span><span>ve</span><span>teknikleri,</span><span>çizim,</span><span>fotoğraf</span><span>vb.</span><span>ile</span></div><div style="position:absolute;left:843px;top:819.4px;font-size:37px;line-height:37px;color:#000;white-space:pre;transform:scaleX(0.93);transform-origin:0 0;-webkit-text-stroke:0.3px #000">desteklenerek açıklanmalıdır.</div></div><div style="position:absolute;left:0;top:0;right:0;bottom:0;border-radius:9px;box-shadow:inset 0 0 0 2px #cfcfcf"></div></div><div style="position:absolute;left:48px;top:607.2px;width:630px;height:361.6px;border-radius:14px;background:#e8705c"></div><div style="position:absolute;left:54px;top:614.2px;width:617.6px;height:347.6px;border-radius:9px;overflow:hidden;background:#fff;box-shadow:inset 0 0 0 0 #000"><div class="th" style="position:absolute;left:0;top:0;width:1927px;height:1084px;transform:scale(0.3205);transform-origin:0 0"><svg class="arcs" width="1927" height="1084" style="position:absolute;left:0;top:0" fill="none" stroke="#c9c9c9" stroke-width="2.1"><path d="M257.0 -6 A908.0 900.0 0 0 0 36.5 1090"/><path d="M289.4 -6 A882.8 1050.0 0 0 0 -18.7 1090"/><path d="M321.8 -6 A785.7 923.7 0 0 0 66.3 1090"/><path d="M513.4 -6 A2049.6 1372.9 0 0 0 183.2 1090" stroke-dasharray="14 8"/><path d="M530.0 -6 A1603.1 1277.6 0 0 0 218.6 1090" stroke-dasharray="16 7 3 7"/><path d="M623.6 -6 A5803.0 1913.3 0 0 0 351.0 1090"/><path d="M658.2 -6 A1488.3 1023.4 0 0 0 395.5 1090"/><path d="M679.1 -6 A1455.8 999.4 0 0 0 427.3 1090"/><path d="M738.2 -6 A1709.4 1027.4 0 0 0 462.1 1090"/><path d="M766.7 -6 A1778.5 1036.9 0 0 0 487.6 1090" stroke-dasharray="14 8"/><path d="M824.9 -6 A1532.6 947.3 0 0 0 534.9 1090"/><path d="M1616 1084 Q1779.5 950.5 1927 801"/><path d="M1655 1084 Q1799.0 968.5 1927 837" stroke-dasharray="10 7"/><path d="M1677 1084 Q1810.0 981.0 1927 862"/><path d="M1702 1084 Q1822.5 992.0 1927 884"/><path d="M1730 1084 Q1836.5 1006.0 1927 912"/><path d="M1778 1084 Q1860.5 1032.5 1927 965"/><path d="M1672 0 Q1745 20 1830 52"/></svg><div style="position:absolute;left:1803px;top:0px;width:124px;height:245px;background:#B8741F;"></div><div style="position:absolute;left:1773.0px;top:66.5px;font-size:16px;line-height:16px;font-weight:400;color:#999;white-space:pre;">5</div><div style="position:absolute;left:128px;top:270px;width:580px;height:80px;background:#F0952B;"></div><div style="position:absolute;left:128px;top:360px;width:580px;height:413.5px;background:#F0952B;"></div><svg width="60" height="50" style="position:absolute;left:388px;top:772px"><polygon points="4.6,1 54,1 30,43" fill="#F0952B"/></svg><div style="position:absolute;left:204.0px;top:271.4px;font-size:74px;line-height:74px;font-weight:700;color:#fff;white-space:pre;transform:scaleX(0.742);transform-origin:0 0;-webkit-text-stroke:1.6px #fff">STAJ ÇEŞİTLERİ</div><div style="position:absolute;left:246.0px;top:530.2px;font-size:69px;line-height:69px;font-weight:700;color:#fff;white-space:pre;transform:scaleX(0.888);transform-origin:0 0;-webkit-text-stroke:1.4px #fff">2) Büro Stajı</div><div style="position:absolute;left:825px;top:246.89999999999998px;width:12.6px;height:13px;background:#F0952B;"></div><div style="position:absolute;left:859px;top:237.6px;width:1022.5px;display:flex;justify-content:space-between;font-size:37px;line-height:37px;color:#000;white-space:pre;transform:scaleX(0.8900);transform-origin:0 0;-webkit-text-stroke:0.3px #000"><span>Etüt</span><span>çalışmaları,</span><span>avan</span><span>proje,</span><span>uygulama</span><span>projesi,</span><span>restorasyon</span></div><div style="position:absolute;left:843px;top:302.4px;width:1040.4px;display:flex;justify-content:space-between;font-size:37px;line-height:37px;color:#000;white-space:pre;transform:scaleX(0.8900);transform-origin:0 0;-webkit-text-stroke:0.3px #000"><span>projesi</span><span>ile</span><span>kentsel</span><span>tasarım</span><span>projesine,donatı</span><span>ve</span><span>mobilya</span><span>tasarımı,</span></div><div style="position:absolute;left:843px;top:367.3px;width:1040.4px;display:flex;justify-content:space-between;font-size:37px;line-height:37px;color:#000;white-space:pre;transform:scaleX(0.8900);transform-origin:0 0;-webkit-text-stroke:0.3px #000"><span>render</span><span>alımı,</span><span>2D</span><span>ve</span><span>3D</span><span>çizimlere</span><span>ait</span><span>her</span><span>türlü</span><span>teknik</span><span>çizim</span></div><div style="position:absolute;left:843px;top:432.2px;width:1040.4px;display:flex;justify-content:space-between;font-size:37px;line-height:37px;color:#000;white-space:pre;transform:scaleX(0.8900);transform-origin:0 0;-webkit-text-stroke:0.3px #000"><span>maket,</span><span>perspektif</span><span>gibi</span><span>mimari</span><span>anlatıma</span><span>yönelik</span><span>mimari</span><span>büro</span></div><div style="position:absolute;left:843px;top:497.1px;width:1040.4px;display:flex;justify-content:space-between;font-size:37px;line-height:37px;color:#000;white-space:pre;transform:scaleX(0.8900);transform-origin:0 0;-webkit-text-stroke:0.3px #000"><span>çalışmalarını</span><span>kapsar.</span><span>Bu</span><span>staj;</span><span>staj</span><span>komisyonunca</span><span>uygun</span><span>görülen</span></div><div style="position:absolute;left:843px;top:561.9px;width:1040.4px;display:flex;justify-content:space-between;font-size:37px;line-height:37px;color:#000;white-space:pre;transform:scaleX(0.8900);transform-origin:0 0;-webkit-text-stroke:0.3px #000"><span>mimarlık</span><span>bürolarında</span><span>yapılır.</span><span>Staj</span><span>dosyası,</span><span>büronun</span></div><div style="position:absolute;left:843px;top:626.8px;width:1040.4px;display:flex;justify-content:space-between;font-size:37px;line-height:37px;color:#000;white-space:pre;transform:scaleX(0.8900);transform-origin:0 0;-webkit-text-stroke:0.3px #000"><span>organizasyon</span><span>şeması,</span><span>iş</span><span>tanımları</span><span>ve</span><span>öğrencinin</span><span>staj</span><span>süresince</span></div><div style="position:absolute;left:843px;top:691.7px;width:1040.4px;display:flex;justify-content:space-between;font-size:37px;line-height:37px;color:#000;white-space:pre;transform:scaleX(0.8900);transform-origin:0 0;-webkit-text-stroke:0.3px #000"><span>yaptığı</span><span>çalışmaları</span><span>içermelidir.</span><span>Dosyada,</span><span>staj</span><span>süresince</span><span>yapılan</span></div><div style="position:absolute;left:843px;top:756.5px;width:1040.4px;display:flex;justify-content:space-between;font-size:37px;line-height:37px;color:#000;white-space:pre;transform:scaleX(0.8900);transform-origin:0 0;-webkit-text-stroke:0.3px #000"><span>çizim,</span><span>eskiz,</span><span>model,</span><span>maket</span><span>ve</span><span>diğer</span><span>tüm</span><span>çalışmalara</span><span>yer</span></div><div style="position:absolute;left:843px;top:821.4px;font-size:37px;line-height:37px;color:#000;white-space:pre;transform:scaleX(0.93);transform-origin:0 0;-webkit-text-stroke:0.3px #000">verilmelidir.</div></div><div style="position:absolute;left:0;top:0;right:0;bottom:0;border-radius:9px;box-shadow:inset 0 0 0 2px #cfcfcf"></div></div><div style="position:absolute;left:13.0px;top:617.3px;font-size:28px;line-height:28px;font-weight:400;color:#e6e6e6;white-space:pre;">5</div><div style="position:absolute;left:54px;top:998.1px;width:617.6px;height:347.6px;border-radius:9px;overflow:hidden;background:#fff;box-shadow:inset 0 0 0 0 #000"><div class="th" style="position:absolute;left:0;top:0;width:1927px;height:1084px;transform:scale(0.3205);transform-origin:0 0"><svg class="arcs" width="1927" height="1084" style="position:absolute;left:0;top:0" fill="none" stroke="#c9c9c9" stroke-width="2.1"><path d="M257.0 -6 A908.0 900.0 0 0 0 36.5 1090"/><path d="M289.4 -6 A882.8 1050.0 0 0 0 -18.7 1090"/><path d="M321.8 -6 A785.7 923.7 0 0 0 66.3 1090"/><path d="M513.4 -6 A2049.6 1372.9 0 0 0 183.2 1090" stroke-dasharray="14 8"/><path d="M530.0 -6 A1603.1 1277.6 0 0 0 218.6 1090" stroke-dasharray="16 7 3 7"/><path d="M623.6 -6 A5803.0 1913.3 0 0 0 351.0 1090"/><path d="M658.2 -6 A1488.3 1023.4 0 0 0 395.5 1090"/><path d="M679.1 -6 A1455.8 999.4 0 0 0 427.3 1090"/><path d="M738.2 -6 A1709.4 1027.4 0 0 0 462.1 1090"/><path d="M766.7 -6 A1778.5 1036.9 0 0 0 487.6 1090" stroke-dasharray="14 8"/><path d="M824.9 -6 A1532.6 947.3 0 0 0 534.9 1090"/><path d="M1616 1084 Q1779.5 950.5 1927 801"/><path d="M1655 1084 Q1799.0 968.5 1927 837" stroke-dasharray="10 7"/><path d="M1677 1084 Q1810.0 981.0 1927 862"/><path d="M1702 1084 Q1822.5 992.0 1927 884"/><path d="M1730 1084 Q1836.5 1006.0 1927 912"/><path d="M1778 1084 Q1860.5 1032.5 1927 965"/><path d="M1672 0 Q1745 20 1830 52"/></svg><div style="position:absolute;left:1803px;top:0px;width:124px;height:245px;background:#B8741F;"></div><div style="position:absolute;left:1773.0px;top:66.5px;font-size:16px;line-height:16px;font-weight:400;color:#999;white-space:pre;">6</div><div style="position:absolute;left:128px;top:270px;width:580px;height:80px;background:#F0952B;"></div><div style="position:absolute;left:128px;top:360px;width:580px;height:413.5px;background:#F0952B;"></div><svg width="60" height="50" style="position:absolute;left:388px;top:772px"><polygon points="4.6,1 54,1 30,43" fill="#F0952B"/></svg><div style="position:absolute;left:363.9px;top:447.2px;font-size:69px;line-height:69px;font-weight:700;color:#fff;white-space:pre;transform:scaleX(0.918);transform-origin:0 0;-webkit-text-stroke:1.4px #fff">Staj</div><div style="position:absolute;left:223.1px;top:530.6px;font-size:69px;line-height:69px;font-weight:700;color:#fff;white-space:pre;transform:scaleX(0.918);transform-origin:0 0;-webkit-text-stroke:1.4px #fff">Yapılabilecek</div><div style="position:absolute;left:308.2px;top:608.6px;font-size:69px;line-height:69px;font-weight:700;color:#fff;white-space:pre;transform:scaleX(0.918);transform-origin:0 0;-webkit-text-stroke:1.4px #fff">Tarihler</div><div style="position:absolute;left:877px;top:295.3px;font-size:36px;line-height:36px;color:#000;white-space:pre;transform:scaleX(0.91);transform-origin:0 0;"><b>-</b>Resmi ve dini bayram tatillerinde,</div><div style="position:absolute;left:877px;top:357.5px;font-size:36px;line-height:36px;color:#000;white-space:pre;transform:scaleX(0.91);transform-origin:0 0;">-Dönem devam ederken,</div><div style="position:absolute;left:877px;top:423.5px;font-size:36px;line-height:36px;color:#000;white-space:pre;transform:scaleX(0.91);transform-origin:0 0;">-Final ve bütünleme sınavları devam ederken,</div><div style="position:absolute;left:877px;top:489.5px;font-size:36px;line-height:36px;color:#000;white-space:pre;transform:scaleX(0.91);transform-origin:0 0;">-Herhangi bir üniversitesinin yaz okuluna kayıt olunması</div><div style="position:absolute;left:877px;top:553.1px;font-size:36px;line-height:36px;color:#000;white-space:pre;transform:scaleX(0.91);transform-origin:0 0;">durumunda <b>staj yapılamaz</b>.</div><div style="position:absolute;left:877px;top:636.5px;font-size:36px;line-height:36px;color:#000;white-space:pre;transform:scaleX(0.91);transform-origin:0 0;">Öğrencinin <b>mezun konumunda olması durumunda</b> (mezun</div><div style="position:absolute;left:877px;top:702.5px;font-size:36px;line-height:36px;color:#000;white-space:pre;transform:scaleX(0.91);transform-origin:0 0;">olabilmek için sadece <b>staj eksiğinin kalması</b> durumu) dönem</div><div style="position:absolute;left:877px;top:768.5px;font-size:36px;line-height:36px;color:#000;white-space:pre;transform:scaleX(0.91);transform-origin:0 0;">içinde staj yapabilmesine izin verilir.</div><div style="position:absolute;left:824px;top:306.8px;width:14px;height:14px;border-radius:50%;background:#F0952B"></div><div style="position:absolute;left:824px;top:648px;width:14px;height:14px;border-radius:50%;background:#F0952B"></div></div><div style="position:absolute;left:0;top:0;right:0;bottom:0;border-radius:9px;box-shadow:inset 0 0 0 2px #cfcfcf"></div></div><div style="position:absolute;left:13.0px;top:1001.6px;font-size:28px;line-height:28px;font-weight:400;color:#e6e6e6;white-space:pre;">6</div><div style="position:absolute;left:54px;top:1382px;width:617.6px;height:347.6px;border-radius:9px;overflow:hidden;background:#fff;box-shadow:inset 0 0 0 0 #000"><div class="th" style="position:absolute;left:0;top:0;width:1927px;height:1084px;transform:scale(0.3205);transform-origin:0 0"><svg class="arcs" width="1927" height="1084" style="position:absolute;left:0;top:0" fill="none" stroke="#c9c9c9" stroke-width="2.1"><path d="M257.0 -6 A908.0 900.0 0 0 0 36.5 1090"/><path d="M289.4 -6 A882.8 1050.0 0 0 0 -18.7 1090"/><path d="M321.8 -6 A785.7 923.7 0 0 0 66.3 1090"/><path d="M513.4 -6 A2049.6 1372.9 0 0 0 183.2 1090" stroke-dasharray="14 8"/><path d="M530.0 -6 A1603.1 1277.6 0 0 0 218.6 1090" stroke-dasharray="16 7 3 7"/><path d="M623.6 -6 A5803.0 1913.3 0 0 0 351.0 1090"/><path d="M658.2 -6 A1488.3 1023.4 0 0 0 395.5 1090"/><path d="M679.1 -6 A1455.8 999.4 0 0 0 427.3 1090"/><path d="M738.2 -6 A1709.4 1027.4 0 0 0 462.1 1090"/><path d="M766.7 -6 A1778.5 1036.9 0 0 0 487.6 1090" stroke-dasharray="14 8"/><path d="M824.9 -6 A1532.6 947.3 0 0 0 534.9 1090"/><path d="M1616 1084 Q1779.5 950.5 1927 801"/><path d="M1655 1084 Q1799.0 968.5 1927 837" stroke-dasharray="10 7"/><path d="M1677 1084 Q1810.0 981.0 1927 862"/><path d="M1702 1084 Q1822.5 992.0 1927 884"/><path d="M1730 1084 Q1836.5 1006.0 1927 912"/><path d="M1778 1084 Q1860.5 1032.5 1927 965"/><path d="M1672 0 Q1745 20 1830 52"/></svg><div style="position:absolute;left:1866px;top:0px;width:61px;height:245px;background:#B8741F;"></div><div style="position:absolute;left:1773.0px;top:66.5px;font-size:16px;line-height:16px;font-weight:400;color:#999;white-space:pre;">7</div><div style="position:absolute;left:128px;top:266px;width:580px;height:80px;background:#F0952B;"></div><div style="position:absolute;left:128px;top:356px;width:580px;height:413.5px;background:#F0952B;"></div><div style="position:absolute;left:886px;top:145.2px;font-size:34px;line-height:34px;color:#000;white-space:pre;transform:scaleX(0.955);transform-origin:0 0;"> Bütün formlar bilgisayar ortamında bozulmadan hazırlanmalıdır.</div><div style="position:absolute;left:877px;top:217.2px;font-size:34px;line-height:34px;color:#000;white-space:pre;transform:scaleX(0.955);transform-origin:0 0;">Tüm formlar <b>mail yoluyla</b> PDF formatında (toplam 4 PDF dosyası)</div><div style="position:absolute;left:877px;top:268.7px;font-size:34px;line-height:34px;color:#000;white-space:pre;transform:scaleX(0.955);transform-origin:0 0;">staj danışmanına gönderilecektir.</div><div style="position:absolute;left:877px;top:340.2px;font-size:34px;line-height:34px;color:#000;white-space:pre;transform:scaleX(0.955);transform-origin:0 0;">Tüm formlar ıslak imzalı ve kaşeli olarak staj bitiminde danışmana teslim edilecektir.</div><div style="position:absolute;left:828px;top:162px;width:7px;height:7px;background:#F0952B;"></div><div style="position:absolute;left:828px;top:234px;width:7px;height:7px;background:#F0952B;"></div><div style="position:absolute;left:828px;top:357px;width:7px;height:7px;background:#F0952B;"></div></div><div style="position:absolute;left:0;top:0;right:0;bottom:0;border-radius:9px;box-shadow:inset 0 0 0 2px #cfcfcf"></div></div><div style="position:absolute;left:13.0px;top:1385.1px;font-size:28px;line-height:28px;font-weight:400;color:#e6e6e6;white-space:pre;">7</div></div></div><div style="position:absolute;left:710px;top:264px;width:7px;height:1230px;background:#333333;"></div><div style="position:absolute;left:717px;top:264px;width:2px;height:1230px;background:#020202;"></div><div style="position:absolute;left:719px;top:264px;width:1px;height:1230px;background:#393939;"></div><div style="position:absolute;left:720px;top:264px;width:1860px;height:1180px;background:#282828;"></div><div style="position:absolute;left:834px;top:310px;width:1927px;height:1084px;background:#fff;box-shadow:0 0 50px 12px rgba(255,255,255,0.055)"></div><div style="position:absolute;left:834px;top:310px;width:1927px;height:1084px;overflow:hidden;background:#fff"><svg class="arcs" width="1927" height="1084" style="position:absolute;left:0;top:0" fill="none" stroke="#c9c9c9" stroke-width="2.1"><path d="M257.0 -6 A908.0 900.0 0 0 0 36.5 1090"/><path d="M289.4 -6 A882.8 1050.0 0 0 0 -18.7 1090"/><path d="M321.8 -6 A785.7 923.7 0 0 0 66.3 1090"/><path d="M513.4 -6 A2049.6 1372.9 0 0 0 183.2 1090" stroke-dasharray="14 8"/><path d="M530.0 -6 A1603.1 1277.6 0 0 0 218.6 1090" stroke-dasharray="16 7 3 7"/><path d="M623.6 -6 A5803.0 1913.3 0 0 0 351.0 1090"/><path d="M658.2 -6 A1488.3 1023.4 0 0 0 395.5 1090"/><path d="M679.1 -6 A1455.8 999.4 0 0 0 427.3 1090"/><path d="M738.2 -6 A1709.4 1027.4 0 0 0 462.1 1090"/><path d="M766.7 -6 A1778.5 1036.9 0 0 0 487.6 1090" stroke-dasharray="14 8"/><path d="M824.9 -6 A1532.6 947.3 0 0 0 534.9 1090"/><path d="M1616 1084 Q1779.5 950.5 1927 801"/><path d="M1655 1084 Q1799.0 968.5 1927 837" stroke-dasharray="10 7"/><path d="M1677 1084 Q1810.0 981.0 1927 862"/><path d="M1702 1084 Q1822.5 992.0 1927 884"/><path d="M1730 1084 Q1836.5 1006.0 1927 912"/><path d="M1778 1084 Q1860.5 1032.5 1927 965"/><path d="M1672 0 Q1745 20 1830 52"/></svg><div style="position:absolute;left:1803px;top:0px;width:124px;height:245px;background:#B8741F;"></div><div style="position:absolute;left:1773.0px;top:66.5px;font-size:16px;line-height:16px;font-weight:400;color:#999;white-space:pre;">5</div><div style="position:absolute;left:128px;top:270px;width:580px;height:80px;background:#F0952B;"></div><div style="position:absolute;left:128px;top:360px;width:580px;height:413.5px;background:#F0952B;"></div><svg width="60" height="50" style="position:absolute;left:388px;top:772px"><polygon points="4.6,1 54,1 30,43" fill="#F0952B"/></svg><div style="position:absolute;left:204.0px;top:271.4px;font-size:74px;line-height:74px;font-weight:700;color:#fff;white-space:pre;transform:scaleX(0.742);transform-origin:0 0;-webkit-text-stroke:1.6px #fff">STAJ ÇEŞİTLERİ</div><div style="position:absolute;left:246.0px;top:530.2px;font-size:69px;line-height:69px;font-weight:700;color:#fff;white-space:pre;transform:scaleX(0.888);transform-origin:0 0;-webkit-text-stroke:1.4px #fff">2) Büro Stajı</div><div style="position:absolute;left:825px;top:246.89999999999998px;width:12.6px;height:13px;background:#F0952B;"></div><div style="position:absolute;left:859px;top:237.6px;width:1022.5px;display:flex;justify-content:space-between;font-size:37px;line-height:37px;color:#000;white-space:pre;transform:scaleX(0.8900);transform-origin:0 0;-webkit-text-stroke:0.3px #000"><span>Etüt</span><span>çalışmaları,</span><span>avan</span><span>proje,</span><span>uygulama</span><span>projesi,</span><span>restorasyon</span></div><div style="position:absolute;left:843px;top:302.4px;width:1040.4px;display:flex;justify-content:space-between;font-size:37px;line-height:37px;color:#000;white-space:pre;transform:scaleX(0.8900);transform-origin:0 0;-webkit-text-stroke:0.3px #000"><span>projesi</span><span>ile</span><span>kentsel</span><span>tasarım</span><span>projesine,donatı</span><span>ve</span><span>mobilya</span><span>tasarımı,</span></div><div style="position:absolute;left:843px;top:367.3px;width:1040.4px;display:flex;justify-content:space-between;font-size:37px;line-height:37px;color:#000;white-space:pre;transform:scaleX(0.8900);transform-origin:0 0;-webkit-text-stroke:0.3px #000"><span>render</span><span>alımı,</span><span>2D</span><span>ve</span><span>3D</span><span>çizimlere</span><span>ait</span><span>her</span><span>türlü</span><span>teknik</span><span>çizim</span></div><div style="position:absolute;left:843px;top:432.2px;width:1040.4px;display:flex;justify-content:space-between;font-size:37px;line-height:37px;color:#000;white-space:pre;transform:scaleX(0.8900);transform-origin:0 0;-webkit-text-stroke:0.3px #000"><span>maket,</span><span>perspektif</span><span>gibi</span><span>mimari</span><span>anlatıma</span><span>yönelik</span><span>mimari</span><span>büro</span></div><div style="position:absolute;left:843px;top:497.1px;width:1040.4px;display:flex;justify-content:space-between;font-size:37px;line-height:37px;color:#000;white-space:pre;transform:scaleX(0.8900);transform-origin:0 0;-webkit-text-stroke:0.3px #000"><span>çalışmalarını</span><span>kapsar.</span><span>Bu</span><span>staj;</span><span>staj</span><span>komisyonunca</span><span>uygun</span><span>görülen</span></div><div style="position:absolute;left:843px;top:561.9px;width:1040.4px;display:flex;justify-content:space-between;font-size:37px;line-height:37px;color:#000;white-space:pre;transform:scaleX(0.8900);transform-origin:0 0;-webkit-text-stroke:0.3px #000"><span>mimarlık</span><span>bürolarında</span><span>yapılır.</span><span>Staj</span><span>dosyası,</span><span>büronun</span></div><div style="position:absolute;left:843px;top:626.8px;width:1040.4px;display:flex;justify-content:space-between;font-size:37px;line-height:37px;color:#000;white-space:pre;transform:scaleX(0.8900);transform-origin:0 0;-webkit-text-stroke:0.3px #000"><span>organizasyon</span><span>şeması,</span><span>iş</span><span>tanımları</span><span>ve</span><span>öğrencinin</span><span>staj</span><span>süresince</span></div><div style="position:absolute;left:843px;top:691.7px;width:1040.4px;display:flex;justify-content:space-between;font-size:37px;line-height:37px;color:#000;white-space:pre;transform:scaleX(0.8900);transform-origin:0 0;-webkit-text-stroke:0.3px #000"><span>yaptığı</span><span>çalışmaları</span><span>içermelidir.</span><span>Dosyada,</span><span>staj</span><span>süresince</span><span>yapılan</span></div><div style="position:absolute;left:843px;top:756.5px;width:1040.4px;display:flex;justify-content:space-between;font-size:37px;line-height:37px;color:#000;white-space:pre;transform:scaleX(0.8900);transform-origin:0 0;-webkit-text-stroke:0.3px #000"><span>çizim,</span><span>eskiz,</span><span>model,</span><span>maket</span><span>ve</span><span>diğer</span><span>tüm</span><span>çalışmalara</span><span>yer</span></div><div style="position:absolute;left:843px;top:821.4px;font-size:37px;line-height:37px;color:#000;white-space:pre;transform:scaleX(0.93);transform-origin:0 0;-webkit-text-stroke:0.3px #000">verilmelidir.</div><svg width="1927" height="1084" style="position:absolute;left:0;top:0"><polyline points="1117.0,274.5 1120.0,277.1 1123.0,274.5 1126.0,277.1 1129.0,274.5 1132.0,277.1 1135.0,274.5 1138.0,277.1 1141.0,274.5 1144.0,277.1 1147.0,274.5 1150.0,277.1 1153.0,274.5 1156.0,277.1 1159.0,274.5 1162.0,277.1 1165.0,274.5 1168.0,277.1 1171.0,274.5 1174.0,277.1 1177.0,274.5 1180.0,277.1 1183.0,274.5 1186.0,277.1" fill="none" stroke="#e8261f" stroke-width="1.6"/><polyline points="1222.0,339.0 1225.0,341.6 1228.0,339.0 1231.0,341.6 1234.0,339.0 1237.0,341.6 1240.0,339.0 1243.0,341.6 1246.0,339.0 1249.0,341.6 1252.0,339.0 1255.0,341.6 1258.0,339.0 1261.0,341.6 1264.0,339.0 1267.0,341.6 1270.0,339.0 1273.0,341.6 1276.0,339.0 1279.0,341.6 1282.0,339.0 1285.0,341.6 1288.0,339.0 1291.0,341.6 1294.0,339.0 1297.0,341.6 1300.0,339.0 1303.0,341.6 1306.0,339.0 1309.0,341.6 1312.0,339.0 1315.0,341.6 1318.0,339.0 1321.0,341.6 1324.0,339.0 1327.0,341.6 1330.0,339.0 1333.0,341.6 1336.0,339.0 1339.0,341.6 1342.0,339.0 1345.0,341.6 1348.0,339.0 1351.0,341.6 1354.0,339.0 1357.0,341.6 1360.0,339.0 1363.0,341.6 1366.0,339.0 1369.0,341.6 1372.0,339.0 1375.0,341.6 1378.0,339.0 1381.0,341.6 1384.0,339.0 1387.0,341.6 1390.0,339.0 1393.0,341.6 1396.0,339.0 1399.0,341.6 1402.0,339.0 1405.0,341.6 1408.0,339.0 1411.0,341.6 1414.0,339.0 1417.0,341.6 1420.0,339.0 1423.0,341.6 1426.0,339.0 1429.0,341.6 1432.0,339.0 1435.0,341.6 1438.0,339.0 1441.0,341.6 1444.0,339.0 1447.0,341.6 1450.0,339.0 1453.0,341.6 1456.0,339.0 1459.0,341.6 1462.0,339.0" fill="none" stroke="#e8261f" stroke-width="1.6"/><polyline points="844.0,402.5 847.0,405.1 850.0,402.5 853.0,405.1 856.0,402.5 859.0,405.1 862.0,402.5 865.0,405.1 868.0,402.5 871.0,405.1 874.0,402.5 877.0,405.1 880.0,402.5 883.0,405.1 886.0,402.5 889.0,405.1 892.0,402.5 895.0,405.1 898.0,402.5 901.0,405.1 904.0,402.5 907.0,405.1 910.0,402.5 913.0,405.1 916.0,402.5 919.0,405.1 922.0,402.5 925.0,405.1 928.0,402.5 931.0,405.1 934.0,402.5 937.0,405.1 940.0,402.5 943.0,405.1 946.0,402.5" fill="none" stroke="#e8261f" stroke-width="1.6"/></svg><div style="position:absolute;left:0;top:0;right:0;bottom:0;box-shadow:inset 0 0 0 2px #d2d2d2"></div></div><div style="position:absolute;left:719px;top:1444px;width:1861px;height:2px;background:#050505;"></div><div style="position:absolute;left:720px;top:1446px;width:1860px;height:48px;background:#282828;"></div><div style="position:absolute;left:735.0px;top:1463.8px;font-size:26px;line-height:26px;font-weight:400;color:#f0f0f0;white-space:pre;">Not eklemek için tıklayın</div><div style="position:absolute;left:1332px;top:1483px;width:212px;height:40px;border-radius:8px;background:#2a2a2a;box-shadow:inset 0 0 0 1.5px #555"></div><div style="position:absolute;left:2382px;top:99px;width:260px;height:82px;border-radius:17px;background:#0c0c0c"></div><div style="position:absolute;left:2428.0px;top:132.3px;font-size:26px;line-height:26px;font-weight:400;color:#f6f6f6;white-space:pre;transform:scaleX(0.98);transform-origin:0 0;">Konuşan:Zehra</div><div style="position:absolute;left:2580px;top:0;width:320px;height:1494px;background:#222;border-top-left-radius:14px;box-shadow:-8px 0 90px rgba(0,0,0,0.42), inset 2px 0 0 #5a5a5a, inset 0 2px 0 #4a4a4a;overflow:hidden"><div style="position:absolute;left:0;top:0;width:320px;height:54px;background:#37363b;box-shadow:inset 2px 0 0 #5a5a5a, inset 0 2px 0 #4a4a4a"></div><div style="position:absolute;left:0;top:54px;width:320px;height:2px;background:#151515"></div><div style="position:absolute;left:16px;top:14px;width:24px;height:24px;border-radius:50%;background:#fe5f57"></div><div style="position:absolute;left:56px;top:14px;width:24px;height:24px;border-radius:50%;background:#febc2e"></div><div style="position:absolute;left:96px;top:14px;width:24px;height:24px;border-radius:50%;background:#28c840"></div><div style="position:absolute;left:266.6px;top:12.0px;font-size:26px;line-height:26px;font-weight:700;color:#b8b8bd;white-space:pre;">Katılımcılar</div><div style="position:absolute;left:16px;top:68px;width:320px;height:52px;border-radius:16px;background:#2a6796"></div><div style="position:absolute;left:23px;top:75px;width:320px;height:38px;border-radius:10px;background:#2e2e2e"></div><svg width="26" height="26" viewBox="0 0 26 26" style="position:absolute;left:36px;top:82px;overflow:visible" fill="none" ><circle cx="10" cy="10" r="8.5" stroke="#e8e8e8" stroke-width="2.2"/><path d="M16 16 L24 24" stroke="#e8e8e8" stroke-width="2.6" stroke-linecap="round"/></svg><div style="position:absolute;left:76px;top:78px;width:2.5px;height:32px;background:#f0f0f0;"></div><div style="position:absolute;left:78.0px;top:83.2px;font-size:24px;line-height:24px;font-weight:400;color:#9a9a9a;white-space:pre;transform:scaleX(0.95);transform-origin:0 0;">Ara</div><svg width="64" height="64" style="position:absolute;left:56px;top:154px"><defs><clipPath id="cz1"><rect width="64" height="64" rx="22"/></clipPath><linearGradient id="gz1" x1="0" y1="0" x2="1" y2="1"><stop offset="0" stop-color="#8894a6"/><stop offset="1" stop-color="#b4bcc8"/></linearGradient></defs><g clip-path="url(#cz1)"><rect width="64" height="64" fill="url(#gz1)"/><rect x="35" y="0" width="9" height="44" fill="#aeb0b2"/><rect x="35" y="0" width="2" height="30" fill="#d8dadc"/><path d="M0 52 L28 50 L44 42 L64 42 V64 H0 Z" fill="#9f9890"/><rect x="28.5" y="21" width="13" height="16.5" rx="3" fill="#d6a49a"/><path d="M30 14 Q34 11 38 14 L39 25 H30 Z" fill="#1d1715"/><rect x="31.5" y="16" width="5.5" height="6" rx="2" fill="#c9a191"/><rect x="29" y="36.5" width="10.5" height="23" rx="2" fill="#eceae8"/><rect x="38" y="53.5" width="9" height="7.5" rx="2" fill="#9b7046"/></g></svg><div style="position:absolute;left:132.0px;top:176.0px;font-size:26px;line-height:26px;font-weight:400;color:#f2f2f2;white-space:pre;-webkit-text-stroke:0.4px currentColor">Zehra...   (Otu</div><div style="position:absolute;left:56px;top:250px;width:64px;height:64px;border-radius:22px;background:#1aae9b"></div><div style="position:absolute;left:56px;top:250px;width:64px;height:64px;line-height:64px;text-align:center;font-size:32px;color:#fff;-webkit-text-stroke:0.6px #fff">ky</div><div style="position:absolute;left:132.0px;top:272.0px;font-size:26px;line-height:26px;font-weight:400;color:#f2f2f2;white-space:pre;-webkit-text-stroke:0.4px currentColor">kardelen yoru</div><div style="position:absolute;left:56px;top:346px;width:64px;height:64px;border-radius:22px;background:#dd6a1c"></div><div style="position:absolute;left:56px;top:346px;width:64px;height:64px;line-height:64px;text-align:center;font-size:32px;color:#fff;-webkit-text-stroke:0.6px #fff">ZS</div><div style="position:absolute;left:132.0px;top:368.0px;font-size:26px;line-height:26px;font-weight:400;color:#f2f2f2;white-space:pre;-webkit-text-stroke:0.4px currentColor">Zeynep SÖNMEZ</div><div style="position:absolute;left:56px;top:442px;width:64px;height:64px;border-radius:22px;background:#3f5b73"></div><div style="position:absolute;left:56px;top:442px;width:64px;height:64px;line-height:64px;text-align:center;font-size:32px;color:#fff;-webkit-text-stroke:0.6px #fff">AB</div><div style="position:absolute;left:132.0px;top:464.0px;font-size:26px;line-height:26px;font-weight:400;color:#f2f2f2;white-space:pre;-webkit-text-stroke:0.4px currentColor">Aleyna Bahar</div><div style="position:absolute;left:56px;top:538px;width:64px;height:64px;border-radius:22px;background:#3b90c8"></div><div style="position:absolute;left:56px;top:538px;width:64px;height:64px;line-height:64px;text-align:center;font-size:32px;color:#fff;-webkit-text-stroke:0.6px #fff">AT</div><div style="position:absolute;left:132.0px;top:560.0px;font-size:26px;line-height:26px;font-weight:400;color:#f2f2f2;white-space:pre;-webkit-text-stroke:0.4px currentColor">Asya Topalak</div><div style="position:absolute;left:56px;top:634px;width:64px;height:64px;border-radius:22px;background:#2fb674"></div><div style="position:absolute;left:56px;top:634px;width:64px;height:64px;line-height:64px;text-align:center;font-size:32px;color:#fff;-webkit-text-stroke:0.6px #fff">bk</div><div style="position:absolute;left:132.0px;top:656.0px;font-size:26px;line-height:26px;font-weight:400;color:#f2f2f2;white-space:pre;-webkit-text-stroke:0.4px currentColor">berivan kaya - </div><div style="position:absolute;left:56px;top:730px;width:64px;height:64px;border-radius:22px;background:#f2a42a"></div><div style="position:absolute;left:56px;top:730px;width:64px;height:64px;line-height:64px;text-align:center;font-size:32px;color:#fff;-webkit-text-stroke:0.6px #fff">B</div><div style="position:absolute;left:132.0px;top:752.0px;font-size:26px;line-height:26px;font-weight:400;color:#f2f2f2;white-space:pre;-webkit-text-stroke:0.4px currentColor">Burak</div><svg width="64" height="64" style="position:absolute;left:56px;top:826px"><defs><clipPath id="cz2"><rect width="64" height="64" rx="22"/></clipPath><linearGradient id="gz2" x1="0" y1="0" x2="0" y2="1"><stop offset="0" stop-color="#8fb0e8"/><stop offset="1" stop-color="#c9d8ef"/></linearGradient></defs><g clip-path="url(#cz2)"><rect width="64" height="64" fill="url(#gz2)"/><path d="M19 32 L21 10 L27 2 L36 -1 L47 3 L52 14 L50 30 Z" fill="#3b5434"/><path d="M52 22 L64 18 V40 H54 Z" fill="#6f8f5c"/><path d="M0 30 Q8 26 14 32 V40 H0 Z" fill="#8a9a72"/><path d="M8 40 L17 26 Q20 21 24 25 L30 32 L42 31 Q45 35 43 40 Z" fill="#1f2743"/><path d="M23 36 L28 33 L26 38 Z" fill="#8aa060"/><path d="M35 22 L45 18 L47 34 L37 34 Z" fill="#e4e4e2"/><rect x="44" y="13.5" width="6" height="7.5" rx="3" fill="#d6bca9"/><path d="M48 16 Q54 22 53 40 H45 Q47 30 46 22 Z" fill="#2f2622"/><rect x="0" y="39.7" width="64" height="25" fill="#2d4626"/><rect x="0" y="52" width="64" height="12" fill="#24391f"/></g></svg><div style="position:absolute;left:132.0px;top:848.0px;font-size:26px;line-height:26px;font-weight:400;color:#f2f2f2;white-space:pre;-webkit-text-stroke:0.4px currentColor">Dilan Culfa</div><div style="position:absolute;left:56px;top:922px;width:64px;height:64px;border-radius:22px;background:#d24e3c"></div><div style="position:absolute;left:56px;top:922px;width:64px;height:64px;line-height:64px;text-align:center;font-size:32px;color:#fff;-webkit-text-stroke:0.6px #fff">eş</div><div style="position:absolute;left:132.0px;top:944.0px;font-size:26px;line-height:26px;font-weight:400;color:#f2f2f2;white-space:pre;-webkit-text-stroke:0.4px currentColor">eda şahbaz</div><div style="position:absolute;left:56px;top:1018px;width:64px;height:64px;border-radius:22px;background:#3b90c8"></div><div style="position:absolute;left:56px;top:1018px;width:64px;height:64px;line-height:64px;text-align:center;font-size:32px;color:#fff;-webkit-text-stroke:0.6px #fff">EC</div><div style="position:absolute;left:132.0px;top:1040.0px;font-size:26px;line-height:26px;font-weight:400;color:#f2f2f2;white-space:pre;-webkit-text-stroke:0.4px currentColor">Efe Candar D</div><div style="position:absolute;left:56px;top:1114px;width:64px;height:64px;border-radius:22px;background:#f2a42a"></div><div style="position:absolute;left:56px;top:1114px;width:64px;height:64px;line-height:64px;text-align:center;font-size:32px;color:#fff;-webkit-text-stroke:0.6px #fff">EE</div><div style="position:absolute;left:132.0px;top:1136.0px;font-size:26px;line-height:26px;font-weight:400;color:#f2f2f2;white-space:pre;-webkit-text-stroke:0.4px currentColor">Elif Ece Topal</div><div style="position:absolute;left:56px;top:1210px;width:64px;height:64px;border-radius:22px;background:#d24e3c"></div><div style="position:absolute;left:56px;top:1210px;width:64px;height:64px;line-height:64px;text-align:center;font-size:32px;color:#fff;-webkit-text-stroke:0.6px #fff">EK</div><div style="position:absolute;left:132.0px;top:1232.0px;font-size:26px;line-height:26px;font-weight:400;color:#f2f2f2;white-space:pre;-webkit-text-stroke:0.4px currentColor">Elif Kasapoğlu</div><div style="position:absolute;left:56px;top:1306px;width:64px;height:64px;border-radius:22px;background:#3b93c9"></div><div style="position:absolute;left:56px;top:1306px;width:64px;height:64px;line-height:64px;text-align:center;font-size:32px;color:#fff;-webkit-text-stroke:0.6px #fff">eg</div><div style="position:absolute;left:132.0px;top:1328.0px;font-size:26px;line-height:26px;font-weight:400;color:#f2f2f2;white-space:pre;-webkit-text-stroke:0.4px currentColor">emirhan gülog</div><div style="position:absolute;left:56px;top:1402px;width:64px;height:64px;border-radius:22px;background:#2fb674"></div><div style="position:absolute;left:56px;top:1402px;width:64px;height:64px;line-height:64px;text-align:center;font-size:32px;color:#fff;-webkit-text-stroke:0.6px #fff">EE</div><div style="position:absolute;left:132.0px;top:1424.0px;font-size:26px;line-height:26px;font-weight:400;color:#f2f2f2;white-space:pre;-webkit-text-stroke:0.4px currentColor">Emre ECEVİT</div><div style="position:absolute;left:0px;top:1458px;width:320px;height:3px;background:#171717;"></div><div style="position:absolute;left:0px;top:1461px;width:320px;height:40px;background:#222;"></div><div style="position:absolute;left:44px;top:1487px;width:149px;height:40px;border-radius:12px;background:#3a3a3e"></div><div style="position:absolute;left:240px;top:1487px;width:149px;height:40px;border-radius:12px;background:#3a3a3e"></div><div style="position:absolute;left:0px;top:56px;width:2px;height:1440px;background:#5a5a5a;"></div></div><div style="position:absolute;left:1120px;top:0;width:330px;height:32px;background:#35d25a;border-bottom-left-radius:10px"></div><div style="position:absolute;left:1442px;top:0;width:254px;height:32px;background:#dc2b33;border-bottom-right-radius:12px"></div><svg width="28" height="24" viewBox="0 0 28 24" style="position:absolute;left:1130px;top:0px;overflow:visible" fill="none" ><path d="M22 0 Q14 2 12 12 L7 8 L5 22 L18 20 L14 16 Q16 8 24 4 Z" fill="#1b4d1f"/></svg><div style="position:absolute;left:1166px;top:-4px;width:215px;height:34px;border-radius:9px;background:#1f72e0;box-shadow:0 0 0 3px #163d1c"></div><div style="position:absolute;left:1186.0px;top:-0.3px;font-size:24px;line-height:24px;font-weight:400;color:#fff;white-space:pre;transform:scaleX(1.042);transform-origin:0 0;">Pro'ya Yükseltin</div><svg width="21" height="23" viewBox="0 0 21 23" style="position:absolute;left:1400px;top:0px;overflow:visible" fill="none" ><path d="M1 0 H20 V9 Q20 17 10.5 22 Q1 17 1 9 Z" fill="#1e5a2a"/><path d="M5 9 L9 13 L16 6" stroke="#3fd36a" stroke-width="2.4"/></svg><div style="position:absolute;left:1464px;top:2px;width:17px;height:16px;border-radius:2px;background:#fff"></div><div style="position:absolute;left:1497.6px;top:-1.9px;font-size:24px;line-height:24px;font-weight:400;color:#fff;white-space:pre;transform:scaleX(0.95);transform-origin:0 0;">Paylaşımı durdur</div></div></body></html>
